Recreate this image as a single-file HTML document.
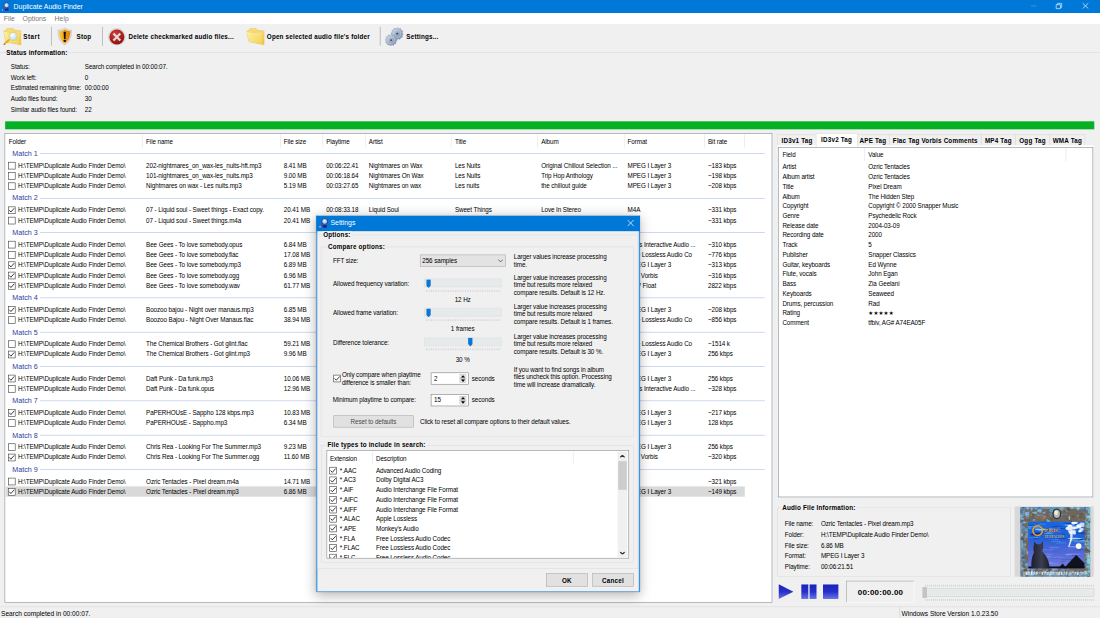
<!DOCTYPE html>
<html lang="en"><head><meta charset="utf-8"><title>Duplicate Audio Finder</title>
<style>
html,body{margin:0;padding:0;background:#f0f0f0;overflow:hidden}
body{width:1100px;height:618px;position:relative}
#root{position:absolute;left:0;top:0;width:1920px;height:1080px;transform-origin:0 0;background:#f0f0f0;overflow:hidden;
 font-family:"Liberation Sans",sans-serif;font-size:11px;color:#000}
#root div,#root span,#root svg.a{position:absolute;box-sizing:border-box}
#root span{white-space:nowrap;display:block}
.t{font-size:11px;letter-spacing:-0.17px}
.b{font-weight:bold;letter-spacing:0.33px}
.cap{background:#f0f0f0;padding:0 2px;margin-left:-2px}
.w{color:#fff}
.g{font-size:12.5px;color:#2c409f;letter-spacing:0}
.cb{border:1px solid #333;background:#fff}
.btn{border:1px solid #adadad;background:#e1e1e1}
.dim{color:#777}
.cap2{background:#fff;padding:0 4px 0 2px;margin-left:-2px}

</style></head>
<body>
<div id="root" style="transform:scale(0.572917,0.572222)">
<svg class="a" style="width:0;height:0"><defs><linearGradient id="gFold" x1="0" y1="0" x2="1" y2="1"><stop offset="0" stop-color="#fdf1a8"/><stop offset="1" stop-color="#f3d155"/></linearGradient><linearGradient id="gFoldB" x1="0" y1="0" x2="0" y2="1"><stop offset="0" stop-color="#f7de7c"/><stop offset="1" stop-color="#ecc545"/></linearGradient><linearGradient id="gShield" x1="0" y1="0" x2="1" y2="0"><stop offset="0" stop-color="#f8c93a"/><stop offset="0.5" stop-color="#f4a515"/><stop offset="1" stop-color="#e58608"/></linearGradient><radialGradient id="gRed" cx="0.4" cy="0.3" r="0.8"><stop offset="0" stop-color="#d93a36"/><stop offset="1" stop-color="#8a0b0b"/></radialGradient><radialGradient id="gLens" cx="0.4" cy="0.35" r="0.7"><stop offset="0" stop-color="#ffffff"/><stop offset="1" stop-color="#a9d4f5"/></radialGradient><linearGradient id="gGear" x1="0" y1="0" x2="1" y2="1"><stop offset="0" stop-color="#cfdae8"/><stop offset="1" stop-color="#7286a8"/></linearGradient><linearGradient id="gPlay" x1="0" y1="0" x2="0" y2="1"><stop offset="0" stop-color="#1a22b8"/><stop offset="0.5" stop-color="#2630cc"/><stop offset="1" stop-color="#6a74e2"/></linearGradient></defs></svg>
<!-- title bar -->
<div style="left:0.0px;top:0.0px;width:1920.0px;height:22.54px;background:#0078d7"></div>
<svg class="a" style="left:2.09px;top:2.8px;width:16.41px;height:16.43px" viewBox="0 0 32 32"><path d="M13 20 L4 29" stroke="#5550b4" stroke-width="5" stroke-linecap="round"/><circle cx="4.4" cy="28.4" r="2.2" fill="#e8eaf6"/><path d="M12 22 q6 4 12 -1 l1.5 8 q-7 4 -13 0 z" fill="#232063"/><circle cx="18.5" cy="12" r="8.8" fill="#9fd8f4" stroke="#3f3c96" stroke-width="3.2"/><circle cx="17.5" cy="10.5" r="3.6" fill="#cfeefb"/></svg>
<span class="t w" style="left:23.74px;top:4.18px;line-height:14px;font-size:12px;letter-spacing:0">Duplicate Audio Finder</span>
<svg class="a" style="left:1780.36px;top:0;width:139.64px;height:22.54px" viewBox="0 0 140 23"><path d="M19 10.6h9.6" stroke="#5aa9e8" stroke-width="1.1" fill="none"/><path d="M63.6 8.3h7.6v7.1h-7.6z M65.8 8.3v-2.3h7.6v7.1h-2.2" stroke="#fff" stroke-width="1.1" fill="none"/><path d="M110.8 5.7l10 9.6M120.8 5.7l-10 9.6" stroke="#fff" stroke-width="1.2" fill="none"/></svg>
<!-- menu bar -->
<div style="left:0.0px;top:22.54px;width:1920.0px;height:19.05px;background:#fff"></div>
<span class="t dim" style="left:6.63px;top:25.33px;line-height:14px;font-size:12px;letter-spacing:0">File</span>
<span class="t dim" style="left:39.45px;top:25.33px;line-height:14px;font-size:12px;letter-spacing:0">Options</span>
<span class="t dim" style="left:95.3px;top:25.33px;line-height:14px;font-size:12px;letter-spacing:0">Help</span>
<!-- toolbar -->
<div style="left:0.0px;top:90.72px;width:1920.0px;height:1px;background:#d9d9d9"></div>
<svg class="a" style="left:4.71px;top:47.88px;width:31.94px;height:31.98px" viewBox="0 0 32 32"><path d="M1.6 6.5 L6.5 4 L8 1.4 L18 1.4 L20 4.4 L32.6 6 L32.6 30.6 L5 25.5 Z" fill="url(#gFoldB)" stroke="#d9b84e" stroke-width="0.7"/><path d="M1.8 7.6 L14 10 L28 8.8 L28.6 29.6 L5.2 25.2 Z" fill="url(#gFold)"/><path d="M10.6 21.8 L2.6 29.2" stroke="#e2ab22" stroke-width="3.2" stroke-linecap="round"/><circle cx="2.6" cy="29.4" r="1.1" fill="#6a5a8a"/><circle cx="18.2" cy="15.6" r="7.3" fill="url(#gLens)" stroke="#efd060" stroke-width="1.8"/></svg>
<span class="t b" style="left:40.67px;top:56.96px;line-height:14px;letter-spacing:0.85px">Start</span>
<div style="left:88.97px;top:47.18px;width:1.5px;height:33.21px;background:#9a9a9a"></div>
<svg class="a" style="left:97.75px;top:47.88px;width:31.94px;height:31.98px" viewBox="0 0 32 32"><path d="M15 0.8 C11.5 3.6 8 4.6 3.2 4.8 C3.2 15.5 5.6 24.8 15 30.6 C24.4 24.8 26.8 15.5 26.8 4.8 C22 4.6 18.5 3.6 15 0.8 Z" fill="#e6e6e6" stroke="#a8a8a8" stroke-width="0.8"/><path d="M15 3 C12 5.4 9 6.3 5.2 6.6 C5.4 15.4 7.6 23 15 28.2 C22.4 23 24.6 15.4 24.8 6.6 C21 6.3 18 5.4 15 3 Z" fill="url(#gShield)"/><path d="M15 3 C18 5.4 21 6.3 24.8 6.6 C24.6 15.4 22.4 23 15 28.2 Z" fill="#e8830a" opacity="0.55"/><path d="M13 7.6 h4 l-0.7 12.4 h-2.6 Z" fill="#14100a"/><circle cx="15" cy="23.4" r="2.1" fill="#14100a"/></svg>
<span class="t b" style="left:133.53px;top:56.96px;line-height:14px;">Stop</span>
<div style="left:177.98px;top:47.18px;width:1.5px;height:33.21px;background:#9a9a9a"></div>
<svg class="a" style="left:187.81px;top:47.53px;width:31.94px;height:31.98px" viewBox="0 0 32 32"><circle cx="16" cy="16.6" r="14.6" fill="#d4d4d4" stroke="#b9b9b9" stroke-width="0.6"/><circle cx="16" cy="16.6" r="13" fill="url(#gRed)"/><path d="M10 10.4 L22 22.8 M22 10.4 L10 22.8" stroke="#dcdcdc" stroke-width="3.9" stroke-linecap="butt"/></svg>
<span class="t b" style="left:224.29px;top:56.96px;line-height:14px;">Delete checkmarked audio files...</span>
<svg class="a" style="left:429.91px;top:47.88px;width:31.94px;height:31.98px" viewBox="0 0 32 32"><path d="M0.4 7 L6 3.6 L7 1.7 L17 1.7 L19 4.6 L31.2 6.3 L31.2 30.2 L4.6 25 Z" fill="url(#gFoldB)" stroke="#d9b84e" stroke-width="0.7"/><path d="M0.6 7.8 L13 10 L26.5 9 L27.2 29.2 L4.8 24.8 Z" fill="url(#gFold)"/></svg>
<span class="t b" style="left:465.69px;top:56.96px;line-height:14px;">Open selected audio file's folder</span>
<div style="left:662.87px;top:47.18px;width:1.5px;height:33.21px;background:#9a9a9a"></div>
<svg class="a" style="left:672.35px;top:47.88px;width:31.94px;height:31.98px" viewBox="0 0 32 32"><polygon points="32.10,10.90 32.01,12.31 30.27,13.30 29.88,14.45 30.65,16.30 29.87,17.47 27.87,17.47 26.95,18.27 26.70,20.25 25.43,20.88 23.70,19.87 22.51,20.11 21.30,21.70 19.89,21.61 18.90,19.87 17.75,19.48 15.90,20.25 14.73,19.47 14.73,17.47 13.93,16.55 11.95,16.30 11.32,15.03 12.33,13.30 12.09,12.11 10.50,10.90 10.59,9.49 12.33,8.50 12.72,7.35 11.95,5.50 12.73,4.33 14.73,4.33 15.65,3.53 15.90,1.55 17.17,0.92 18.90,1.93 20.09,1.69 21.30,0.10 22.71,0.19 23.70,1.93 24.85,2.32 26.70,1.55 27.87,2.33 27.87,4.33 28.67,5.25 30.65,5.50 31.28,6.77 30.27,8.50 30.51,9.69" fill="url(#gGear)" stroke="#7f90ad" stroke-width="0.6"/><circle cx="21.3" cy="10.9" r="6.70" fill="none" stroke="#dfe7f2" stroke-width="0.9" opacity="0.7"/><circle cx="21.3" cy="10.9" r="1.51" fill="#26304a"/><polygon points="20.80,22.20 20.71,23.53 19.07,24.47 18.70,25.56 19.43,27.30 18.69,28.41 16.80,28.40 15.94,29.16 15.70,31.03 14.50,31.62 12.87,30.67 11.74,30.90 10.60,32.40 9.27,32.31 8.33,30.67 7.24,30.30 5.50,31.03 4.39,30.29 4.40,28.40 3.64,27.54 1.77,27.30 1.18,26.10 2.13,24.47 1.90,23.34 0.40,22.20 0.49,20.87 2.13,19.93 2.50,18.84 1.77,17.10 2.51,15.99 4.40,16.00 5.26,15.24 5.50,13.37 6.70,12.78 8.33,13.73 9.46,13.50 10.60,12.00 11.93,12.09 12.87,13.73 13.96,14.10 15.70,13.37 16.81,14.11 16.80,16.00 17.56,16.86 19.43,17.10 20.02,18.30 19.07,19.93 19.30,21.06" fill="url(#gGear)" stroke="#7f90ad" stroke-width="0.6"/><circle cx="10.6" cy="22.2" r="6.32" fill="none" stroke="#dfe7f2" stroke-width="0.9" opacity="0.7"/><circle cx="10.6" cy="22.2" r="1.43" fill="#26304a"/></svg>
<span class="t b" style="left:709.18px;top:56.96px;line-height:14px;">Settings...</span>
<!-- status information -->
<span class="t b" style="left:11.0px;top:85.1px;line-height:14px;">Status information:</span>
<span class="t" style="left:18.85px;top:109.21px;line-height:14px;">Status:</span>
<span class="t" style="left:148.01px;top:109.21px;line-height:14px;">Search completed in 00:00:07.</span>
<span class="t" style="left:18.85px;top:128.09px;line-height:14px;">Work left:</span>
<span class="t" style="left:148.01px;top:128.09px;line-height:14px;">0</span>
<span class="t" style="left:18.85px;top:147.14px;line-height:14px;">Estimated remaining time:</span>
<span class="t" style="left:148.01px;top:147.14px;line-height:14px;">00:00:00</span>
<span class="t" style="left:18.85px;top:166.18px;line-height:14px;">Audio files found:</span>
<span class="t" style="left:148.01px;top:166.18px;line-height:14px;">30</span>
<span class="t" style="left:18.85px;top:184.88px;line-height:14px;">Similar audio files found:</span>
<span class="t" style="left:148.01px;top:184.88px;line-height:14px;">22</span>
<!-- progress bar -->
<div style="left:8.73px;top:211.81px;width:1901.67px;height:14.5px;background:#06b025"></div>
<!-- status bar -->
<div style="left:0.0px;top:1060.1px;width:1920.0px;height:1px;background:#d9d9d9"></div>
<span class="t" style="left:1.75px;top:1065.31px;line-height:14px;font-size:11.5px;letter-spacing:0">Search completed in 00:00:07.</span>
<div style="left:1569.89px;top:1061.48px;width:1px;height:18.52px;background:#d0d0d0"></div>
<span class="t" style="left:1573.7px;top:1065.31px;line-height:14px;font-size:11.5px;letter-spacing:-0.05px">Windows Store Version 1.0.23.50</span>
<!-- result list -->
<div style="left:8.03px;top:233.13px;width:1339.98px;height:820.31px;background:#fff;border:1px solid #828790"></div>
<div style="left:248.23px;top:234.52px;width:1px;height:23.95px;background:#e2e2e2"></div>
<div style="left:488.58px;top:234.52px;width:1px;height:23.95px;background:#e2e2e2"></div>
<div style="left:562.58px;top:234.52px;width:1px;height:23.95px;background:#e2e2e2"></div>
<div style="left:636.94px;top:234.52px;width:1px;height:23.95px;background:#e2e2e2"></div>
<div style="left:787.22px;top:234.52px;width:1px;height:23.95px;background:#e2e2e2"></div>
<div style="left:937.86px;top:234.52px;width:1px;height:23.95px;background:#e2e2e2"></div>
<div style="left:1088.66px;top:234.52px;width:1px;height:23.95px;background:#e2e2e2"></div>
<div style="left:1229.0px;top:234.52px;width:1px;height:23.95px;background:#e2e2e2"></div>
<div style="left:1298.99px;top:234.52px;width:1px;height:23.95px;background:#e2e2e2"></div>
<span class="t" style="left:15.36px;top:240.28px;line-height:14px;">Folder</span>
<span class="t" style="left:255.01px;top:240.28px;line-height:14px;">File name</span>
<span class="t" style="left:495.36px;top:240.28px;line-height:14px;">File size</span>
<span class="t" style="left:569.37px;top:240.28px;line-height:14px;">Playtime</span>
<span class="t" style="left:643.72px;top:240.28px;line-height:14px;">Artist</span>
<span class="t" style="left:794.01px;top:240.28px;line-height:14px;">Title</span>
<span class="t" style="left:944.64px;top:240.28px;line-height:14px;">Album</span>
<span class="t" style="left:1095.45px;top:240.28px;line-height:14px;">Format</span>
<span class="t" style="left:1235.78px;top:240.28px;line-height:14px;">Bit rate</span>
<div style="left:18.5px;top:267.75px;width:1316.77px;height:1px;background:#a9bde0"></div>
<span class="g cap2" style="left:21.47px;top:260.43px;line-height:16px;">Match 1</span>
<div class="cb" style="left:14.27px;top:282.55px;width:13px;height:13px"></div>
<span class="t" style="left:31.24px;top:282.05px;line-height:14px;">H:\TEMP\Duplicate Audio Finder Demo\</span>
<span class="t" style="left:255.01px;top:282.05px;line-height:14px;">202-nightmares_on_wax-les_nuits-hft.mp3</span>
<span class="t" style="left:495.36px;top:282.05px;line-height:14px;">8.41 MB</span>
<span class="t" style="left:569.37px;top:282.05px;line-height:14px;">00:06:22.41</span>
<span class="t" style="left:643.72px;top:282.05px;line-height:14px;">Nightmares on Wax</span>
<span class="t" style="left:794.01px;top:282.05px;line-height:14px;">Les Nuits</span>
<span class="t" style="left:944.64px;top:282.05px;line-height:14px;">Original Chillout Selection ...</span>
<span class="t" style="left:1095.45px;top:282.05px;line-height:14px;">MPEG I Layer 3</span>
<span class="t" style="left:1235.78px;top:282.05px;line-height:14px;">~183 kbps</span>
<div class="cb" style="left:14.27px;top:300.55px;width:13px;height:13px"></div>
<span class="t" style="left:31.24px;top:300.05px;line-height:14px;">H:\TEMP\Duplicate Audio Finder Demo\</span>
<span class="t" style="left:255.01px;top:300.05px;line-height:14px;">101-nightmares_on_wax-les_nuits.mp3</span>
<span class="t" style="left:495.36px;top:300.05px;line-height:14px;">9.00 MB</span>
<span class="t" style="left:569.37px;top:300.05px;line-height:14px;">00:06:18.64</span>
<span class="t" style="left:643.72px;top:300.05px;line-height:14px;">Nightmares On Wax</span>
<span class="t" style="left:794.01px;top:300.05px;line-height:14px;">Les Nuits</span>
<span class="t" style="left:944.64px;top:300.05px;line-height:14px;">Trip Hop Anthology</span>
<span class="t" style="left:1095.45px;top:300.05px;line-height:14px;">MPEG I Layer 3</span>
<span class="t" style="left:1235.78px;top:300.05px;line-height:14px;">~198 kbps</span>
<div class="cb" style="left:14.27px;top:318.55px;width:13px;height:13px"></div>
<span class="t" style="left:31.24px;top:318.05px;line-height:14px;">H:\TEMP\Duplicate Audio Finder Demo\</span>
<span class="t" style="left:255.01px;top:318.05px;line-height:14px;">Nightmares on wax - Les nuits.mp3</span>
<span class="t" style="left:495.36px;top:318.05px;line-height:14px;">5.19 MB</span>
<span class="t" style="left:569.37px;top:318.05px;line-height:14px;">00:03:27.65</span>
<span class="t" style="left:643.72px;top:318.05px;line-height:14px;">Nightmares on wax</span>
<span class="t" style="left:794.01px;top:318.05px;line-height:14px;">Les nuits</span>
<span class="t" style="left:944.64px;top:318.05px;line-height:14px;">the chillout guide</span>
<span class="t" style="left:1095.45px;top:318.05px;line-height:14px;">MPEG I Layer 3</span>
<span class="t" style="left:1235.78px;top:318.05px;line-height:14px;">~208 kbps</span>
<div style="left:18.5px;top:345.78px;width:1316.77px;height:1px;background:#a9bde0"></div>
<span class="g cap2" style="left:21.47px;top:338.46px;line-height:16px;">Match 2</span>
<div class="cb" style="left:14.27px;top:360.58px;width:13px;height:13px"><svg viewBox="0 0 13 13" width="13" height="13" style="position:absolute;left:-1px;top:-1px"><path d="M2.2 6.3 L5.0 9.5 L10.9 2.9" fill="none" stroke="#111" stroke-width="1.45"/></svg></div>
<span class="t" style="left:31.24px;top:360.08px;line-height:14px;">H:\TEMP\Duplicate Audio Finder Demo\</span>
<span class="t" style="left:255.01px;top:360.08px;line-height:14px;">07 - Liquid soul - Sweet things - Exact copy.</span>
<span class="t" style="left:495.36px;top:360.08px;line-height:14px;">20.41 MB</span>
<span class="t" style="left:569.37px;top:360.08px;line-height:14px;">00:08:33.18</span>
<span class="t" style="left:643.72px;top:360.08px;line-height:14px;">Liquid Soul</span>
<span class="t" style="left:794.01px;top:360.08px;line-height:14px;">Sweet Things</span>
<span class="t" style="left:944.64px;top:360.08px;line-height:14px;">Love In Stereo</span>
<span class="t" style="left:1095.45px;top:360.08px;line-height:14px;">M4A</span>
<span class="t" style="left:1235.78px;top:360.08px;line-height:14px;">~331 kbps</span>
<div class="cb" style="left:14.27px;top:378.58px;width:13px;height:13px"></div>
<span class="t" style="left:31.24px;top:378.08px;line-height:14px;">H:\TEMP\Duplicate Audio Finder Demo\</span>
<span class="t" style="left:255.01px;top:378.08px;line-height:14px;">07 - Liquid soul - Sweet things.m4a</span>
<span class="t" style="left:495.36px;top:378.08px;line-height:14px;">20.41 MB</span>
<span class="t" style="left:569.37px;top:378.08px;line-height:14px;">00:08:33.18</span>
<span class="t" style="left:643.72px;top:378.08px;line-height:14px;">Liquid Soul</span>
<span class="t" style="left:794.01px;top:378.08px;line-height:14px;">Sweet Things</span>
<span class="t" style="left:944.64px;top:378.08px;line-height:14px;">Love In Stereo</span>
<span class="t" style="left:1095.45px;top:378.08px;line-height:14px;letter-spacing:-0.9px">M4A</span>
<span class="t" style="left:1235.78px;top:378.08px;line-height:14px;">~331 kbps</span>
<div style="left:18.5px;top:405.81px;width:1316.77px;height:1px;background:#a9bde0"></div>
<span class="g cap2" style="left:21.47px;top:398.49px;line-height:16px;">Match 3</span>
<div class="cb" style="left:14.27px;top:420.61px;width:13px;height:13px"></div>
<span class="t" style="left:31.24px;top:420.11px;line-height:14px;">H:\TEMP\Duplicate Audio Finder Demo\</span>
<span class="t" style="left:255.01px;top:420.11px;line-height:14px;">Bee Gees - To love somebody.opus</span>
<span class="t" style="left:495.36px;top:420.11px;line-height:14px;">6.84 MB</span>
<span class="t" style="left:569.37px;top:420.11px;line-height:14px;">00:03:01.62</span>
<span class="t" style="left:643.72px;top:420.11px;line-height:14px;">Bee Gees</span>
<span class="t" style="left:794.01px;top:420.11px;line-height:14px;">To Love Somebody</span>
<span class="t" style="left:944.64px;top:420.11px;line-height:14px;">Bee Gees 1st</span>
<span class="t" style="left:1095.45px;top:420.11px;line-height:14px;">Opus Interactive Audio ...</span>
<span class="t" style="left:1235.78px;top:420.11px;line-height:14px;">~310 kbps</span>
<div class="cb" style="left:14.27px;top:438.61px;width:13px;height:13px"></div>
<span class="t" style="left:31.24px;top:438.11px;line-height:14px;">H:\TEMP\Duplicate Audio Finder Demo\</span>
<span class="t" style="left:255.01px;top:438.11px;line-height:14px;">Bee Gees - To love somebody.flac</span>
<span class="t" style="left:495.36px;top:438.11px;line-height:14px;">17.08 MB</span>
<span class="t" style="left:569.37px;top:438.11px;line-height:14px;">00:03:01.62</span>
<span class="t" style="left:643.72px;top:438.11px;line-height:14px;">Bee Gees</span>
<span class="t" style="left:794.01px;top:438.11px;line-height:14px;">To Love Somebody</span>
<span class="t" style="left:944.64px;top:438.11px;line-height:14px;">Bee Gees 1st</span>
<span class="t" style="left:1095.45px;top:438.11px;line-height:14px;">Free Lossless Audio Co</span>
<span class="t" style="left:1235.78px;top:438.11px;line-height:14px;">~776 kbps</span>
<div class="cb" style="left:14.27px;top:456.61px;width:13px;height:13px"><svg viewBox="0 0 13 13" width="13" height="13" style="position:absolute;left:-1px;top:-1px"><path d="M2.2 6.3 L5.0 9.5 L10.9 2.9" fill="none" stroke="#111" stroke-width="1.45"/></svg></div>
<span class="t" style="left:31.24px;top:456.11px;line-height:14px;">H:\TEMP\Duplicate Audio Finder Demo\</span>
<span class="t" style="left:255.01px;top:456.11px;line-height:14px;">Bee Gees - To love somebody.mp3</span>
<span class="t" style="left:495.36px;top:456.11px;line-height:14px;">6.89 MB</span>
<span class="t" style="left:569.37px;top:456.11px;line-height:14px;">00:03:01.62</span>
<span class="t" style="left:643.72px;top:456.11px;line-height:14px;">Bee Gees</span>
<span class="t" style="left:794.01px;top:456.11px;line-height:14px;">To Love Somebody</span>
<span class="t" style="left:944.64px;top:456.11px;line-height:14px;">Bee Gees 1st</span>
<span class="t" style="left:1095.45px;top:456.11px;line-height:14px;">MPEG I Layer 3</span>
<span class="t" style="left:1235.78px;top:456.11px;line-height:14px;">~313 kbps</span>
<div class="cb" style="left:14.27px;top:474.61px;width:13px;height:13px"><svg viewBox="0 0 13 13" width="13" height="13" style="position:absolute;left:-1px;top:-1px"><path d="M2.2 6.3 L5.0 9.5 L10.9 2.9" fill="none" stroke="#111" stroke-width="1.45"/></svg></div>
<span class="t" style="left:31.24px;top:474.11px;line-height:14px;">H:\TEMP\Duplicate Audio Finder Demo\</span>
<span class="t" style="left:255.01px;top:474.11px;line-height:14px;">Bee Gees - To love somebody.ogg</span>
<span class="t" style="left:495.36px;top:474.11px;line-height:14px;">6.96 MB</span>
<span class="t" style="left:569.37px;top:474.11px;line-height:14px;">00:03:01.62</span>
<span class="t" style="left:643.72px;top:474.11px;line-height:14px;">Bee Gees</span>
<span class="t" style="left:794.01px;top:474.11px;line-height:14px;">To Love Somebody</span>
<span class="t" style="left:944.64px;top:474.11px;line-height:14px;">Bee Gees 1st</span>
<span class="t" style="left:1095.45px;top:474.11px;line-height:14px;">Ogg Vorbis</span>
<span class="t" style="left:1235.78px;top:474.11px;line-height:14px;">~316 kbps</span>
<div class="cb" style="left:14.27px;top:492.61px;width:13px;height:13px"><svg viewBox="0 0 13 13" width="13" height="13" style="position:absolute;left:-1px;top:-1px"><path d="M2.2 6.3 L5.0 9.5 L10.9 2.9" fill="none" stroke="#111" stroke-width="1.45"/></svg></div>
<span class="t" style="left:31.24px;top:492.11px;line-height:14px;">H:\TEMP\Duplicate Audio Finder Demo\</span>
<span class="t" style="left:255.01px;top:492.11px;line-height:14px;">Bee Gees - To love somebody.wav</span>
<span class="t" style="left:495.36px;top:492.11px;line-height:14px;">61.77 MB</span>
<span class="t" style="left:569.37px;top:492.11px;line-height:14px;">00:03:01.62</span>
<span class="t" style="left:1095.45px;top:492.11px;line-height:14px;">WAV Float</span>
<span class="t" style="left:1235.78px;top:492.11px;line-height:14px;">2822 kbps</span>
<div style="left:18.5px;top:519.84px;width:1316.77px;height:1px;background:#a9bde0"></div>
<span class="g cap2" style="left:21.47px;top:512.51px;line-height:16px;">Match 4</span>
<div class="cb" style="left:14.27px;top:534.64px;width:13px;height:13px"><svg viewBox="0 0 13 13" width="13" height="13" style="position:absolute;left:-1px;top:-1px"><path d="M2.2 6.3 L5.0 9.5 L10.9 2.9" fill="none" stroke="#111" stroke-width="1.45"/></svg></div>
<span class="t" style="left:31.24px;top:534.14px;line-height:14px;">H:\TEMP\Duplicate Audio Finder Demo\</span>
<span class="t" style="left:255.01px;top:534.14px;line-height:14px;">Boozoo bajou - Night over manaus.mp3</span>
<span class="t" style="left:495.36px;top:534.14px;line-height:14px;">6.85 MB</span>
<span class="t" style="left:569.37px;top:534.14px;line-height:14px;">00:05:59.13</span>
<span class="t" style="left:643.72px;top:534.14px;line-height:14px;">Boozoo Bajou</span>
<span class="t" style="left:794.01px;top:534.14px;line-height:14px;">Night Over Manaus</span>
<span class="t" style="left:944.64px;top:534.14px;line-height:14px;">Satta</span>
<span class="t" style="left:1095.45px;top:534.14px;line-height:14px;">MPEG I Layer 3</span>
<span class="t" style="left:1235.78px;top:534.14px;line-height:14px;">~208 kbps</span>
<div class="cb" style="left:14.27px;top:552.64px;width:13px;height:13px"></div>
<span class="t" style="left:31.24px;top:552.14px;line-height:14px;">H:\TEMP\Duplicate Audio Finder Demo\</span>
<span class="t" style="left:255.01px;top:552.14px;line-height:14px;">Boozoo Bajou - Night Over Manaus.flac</span>
<span class="t" style="left:495.36px;top:552.14px;line-height:14px;">38.94 MB</span>
<span class="t" style="left:569.37px;top:552.14px;line-height:14px;">00:05:59.13</span>
<span class="t" style="left:643.72px;top:552.14px;line-height:14px;">Boozoo Bajou</span>
<span class="t" style="left:794.01px;top:552.14px;line-height:14px;">Night Over Manaus</span>
<span class="t" style="left:944.64px;top:552.14px;line-height:14px;">Satta</span>
<span class="t" style="left:1095.45px;top:552.14px;line-height:14px;">Free Lossless Audio Co</span>
<span class="t" style="left:1235.78px;top:552.14px;line-height:14px;">~856 kbps</span>
<div style="left:18.5px;top:579.87px;width:1316.77px;height:1px;background:#a9bde0"></div>
<span class="g cap2" style="left:21.47px;top:572.54px;line-height:16px;">Match 5</span>
<div class="cb" style="left:14.27px;top:594.67px;width:13px;height:13px"></div>
<span class="t" style="left:31.24px;top:594.17px;line-height:14px;">H:\TEMP\Duplicate Audio Finder Demo\</span>
<span class="t" style="left:255.01px;top:594.17px;line-height:14px;">The Chemical Brothers - Got glint.flac</span>
<span class="t" style="left:495.36px;top:594.17px;line-height:14px;">59.21 MB</span>
<span class="t" style="left:569.37px;top:594.17px;line-height:14px;">00:05:26.40</span>
<span class="t" style="left:643.72px;top:594.17px;line-height:14px;">The Chemical Brothers</span>
<span class="t" style="left:794.01px;top:594.17px;line-height:14px;">Got Glint?</span>
<span class="t" style="left:944.64px;top:594.17px;line-height:14px;">Surrender</span>
<span class="t" style="left:1095.45px;top:594.17px;line-height:14px;">Free Lossless Audio Co</span>
<span class="t" style="left:1235.78px;top:594.17px;line-height:14px;">~1514 k</span>
<div class="cb" style="left:14.27px;top:612.67px;width:13px;height:13px"><svg viewBox="0 0 13 13" width="13" height="13" style="position:absolute;left:-1px;top:-1px"><path d="M2.2 6.3 L5.0 9.5 L10.9 2.9" fill="none" stroke="#111" stroke-width="1.45"/></svg></div>
<span class="t" style="left:31.24px;top:612.17px;line-height:14px;">H:\TEMP\Duplicate Audio Finder Demo\</span>
<span class="t" style="left:255.01px;top:612.17px;line-height:14px;">The Chemical Brothers - Got glint.mp3</span>
<span class="t" style="left:495.36px;top:612.17px;line-height:14px;">9.96 MB</span>
<span class="t" style="left:569.37px;top:612.17px;line-height:14px;">00:05:26.40</span>
<span class="t" style="left:643.72px;top:612.17px;line-height:14px;">The Chemical Brothers</span>
<span class="t" style="left:794.01px;top:612.17px;line-height:14px;">Got Glint?</span>
<span class="t" style="left:944.64px;top:612.17px;line-height:14px;">Surrender</span>
<span class="t" style="left:1095.45px;top:612.17px;line-height:14px;">MPEG I Layer 3</span>
<span class="t" style="left:1235.78px;top:612.17px;line-height:14px;">256 kbps</span>
<div style="left:18.5px;top:639.9px;width:1316.77px;height:1px;background:#a9bde0"></div>
<span class="g cap2" style="left:21.47px;top:632.57px;line-height:16px;">Match 6</span>
<div class="cb" style="left:14.27px;top:654.69px;width:13px;height:13px"><svg viewBox="0 0 13 13" width="13" height="13" style="position:absolute;left:-1px;top:-1px"><path d="M2.2 6.3 L5.0 9.5 L10.9 2.9" fill="none" stroke="#111" stroke-width="1.45"/></svg></div>
<span class="t" style="left:31.24px;top:654.19px;line-height:14px;">H:\TEMP\Duplicate Audio Finder Demo\</span>
<span class="t" style="left:255.01px;top:654.19px;line-height:14px;">Daft Punk - Da funk.mp3</span>
<span class="t" style="left:495.36px;top:654.19px;line-height:14px;">10.06 MB</span>
<span class="t" style="left:569.37px;top:654.19px;line-height:14px;">00:05:28.72</span>
<span class="t" style="left:643.72px;top:654.19px;line-height:14px;">Daft Punk</span>
<span class="t" style="left:794.01px;top:654.19px;line-height:14px;">Da Funk</span>
<span class="t" style="left:944.64px;top:654.19px;line-height:14px;">Homework</span>
<span class="t" style="left:1095.45px;top:654.19px;line-height:14px;">MPEG I Layer 3</span>
<span class="t" style="left:1235.78px;top:654.19px;line-height:14px;">256 kbps</span>
<div class="cb" style="left:14.27px;top:672.69px;width:13px;height:13px"></div>
<span class="t" style="left:31.24px;top:672.19px;line-height:14px;">H:\TEMP\Duplicate Audio Finder Demo\</span>
<span class="t" style="left:255.01px;top:672.19px;line-height:14px;">Daft Punk - Da funk.opus</span>
<span class="t" style="left:495.36px;top:672.19px;line-height:14px;">12.96 MB</span>
<span class="t" style="left:569.37px;top:672.19px;line-height:14px;">00:05:28.72</span>
<span class="t" style="left:643.72px;top:672.19px;line-height:14px;">Daft Punk</span>
<span class="t" style="left:794.01px;top:672.19px;line-height:14px;">Da Funk</span>
<span class="t" style="left:944.64px;top:672.19px;line-height:14px;">Homework</span>
<span class="t" style="left:1095.45px;top:672.19px;line-height:14px;">Opus Interactive Audio ...</span>
<span class="t" style="left:1235.78px;top:672.19px;line-height:14px;">~328 kbps</span>
<div style="left:18.5px;top:699.93px;width:1316.77px;height:1px;background:#a9bde0"></div>
<span class="g cap2" style="left:21.47px;top:692.6px;line-height:16px;">Match 7</span>
<div class="cb" style="left:14.27px;top:714.72px;width:13px;height:13px"><svg viewBox="0 0 13 13" width="13" height="13" style="position:absolute;left:-1px;top:-1px"><path d="M2.2 6.3 L5.0 9.5 L10.9 2.9" fill="none" stroke="#111" stroke-width="1.45"/></svg></div>
<span class="t" style="left:31.24px;top:714.22px;line-height:14px;">H:\TEMP\Duplicate Audio Finder Demo\</span>
<span class="t" style="left:255.01px;top:714.22px;line-height:14px;">PaPERHOUsE - Sappho 128 kbps.mp3</span>
<span class="t" style="left:495.36px;top:714.22px;line-height:14px;">10.83 MB</span>
<span class="t" style="left:569.37px;top:714.22px;line-height:14px;">00:06:38.04</span>
<span class="t" style="left:643.72px;top:714.22px;line-height:14px;">Paperhouse</span>
<span class="t" style="left:794.01px;top:714.22px;line-height:14px;">Sappho</span>
<span class="t" style="left:944.64px;top:714.22px;line-height:14px;">Spongy Wet Sounds</span>
<span class="t" style="left:1095.45px;top:714.22px;line-height:14px;">MPEG I Layer 3</span>
<span class="t" style="left:1235.78px;top:714.22px;line-height:14px;">~217 kbps</span>
<div class="cb" style="left:14.27px;top:732.72px;width:13px;height:13px"></div>
<span class="t" style="left:31.24px;top:732.22px;line-height:14px;">H:\TEMP\Duplicate Audio Finder Demo\</span>
<span class="t" style="left:255.01px;top:732.22px;line-height:14px;">PaPERHOUsE - Sappho.mp3</span>
<span class="t" style="left:495.36px;top:732.22px;line-height:14px;">6.34 MB</span>
<span class="t" style="left:569.37px;top:732.22px;line-height:14px;">00:06:38.04</span>
<span class="t" style="left:643.72px;top:732.22px;line-height:14px;">Paperhouse</span>
<span class="t" style="left:794.01px;top:732.22px;line-height:14px;">Sappho</span>
<span class="t" style="left:944.64px;top:732.22px;line-height:14px;">Spongy Wet Sounds</span>
<span class="t" style="left:1095.45px;top:732.22px;line-height:14px;">MPEG I Layer 3</span>
<span class="t" style="left:1235.78px;top:732.22px;line-height:14px;">128 kbps</span>
<div style="left:18.5px;top:759.96px;width:1316.77px;height:1px;background:#a9bde0"></div>
<span class="g cap2" style="left:21.47px;top:752.63px;line-height:16px;">Match 8</span>
<div class="cb" style="left:14.27px;top:774.75px;width:13px;height:13px"></div>
<span class="t" style="left:31.24px;top:774.25px;line-height:14px;">H:\TEMP\Duplicate Audio Finder Demo\</span>
<span class="t" style="left:255.01px;top:774.25px;line-height:14px;">Chris Rea - Looking For The Summer.mp3</span>
<span class="t" style="left:495.36px;top:774.25px;line-height:14px;">9.23 MB</span>
<span class="t" style="left:569.37px;top:774.25px;line-height:14px;">00:05:02.10</span>
<span class="t" style="left:643.72px;top:774.25px;line-height:14px;">Chris Rea</span>
<span class="t" style="left:794.01px;top:774.25px;line-height:14px;">Looking For The Summer</span>
<span class="t" style="left:944.64px;top:774.25px;line-height:14px;">Auberge</span>
<span class="t" style="left:1095.45px;top:774.25px;line-height:14px;">MPEG I Layer 3</span>
<span class="t" style="left:1235.78px;top:774.25px;line-height:14px;">256 kbps</span>
<div class="cb" style="left:14.27px;top:792.75px;width:13px;height:13px"><svg viewBox="0 0 13 13" width="13" height="13" style="position:absolute;left:-1px;top:-1px"><path d="M2.2 6.3 L5.0 9.5 L10.9 2.9" fill="none" stroke="#111" stroke-width="1.45"/></svg></div>
<span class="t" style="left:31.24px;top:792.25px;line-height:14px;">H:\TEMP\Duplicate Audio Finder Demo\</span>
<span class="t" style="left:255.01px;top:792.25px;line-height:14px;">Chris Rea - Looking For The Summer.ogg</span>
<span class="t" style="left:495.36px;top:792.25px;line-height:14px;">11.60 MB</span>
<span class="t" style="left:569.37px;top:792.25px;line-height:14px;">00:05:02.10</span>
<span class="t" style="left:643.72px;top:792.25px;line-height:14px;">Chris Rea</span>
<span class="t" style="left:794.01px;top:792.25px;line-height:14px;">Looking For The Summer</span>
<span class="t" style="left:944.64px;top:792.25px;line-height:14px;">Auberge</span>
<span class="t" style="left:1095.45px;top:792.25px;line-height:14px;">Ogg Vorbis</span>
<span class="t" style="left:1235.78px;top:792.25px;line-height:14px;">~320 kbps</span>
<div style="left:18.5px;top:819.99px;width:1316.77px;height:1px;background:#a9bde0"></div>
<span class="g cap2" style="left:21.47px;top:812.66px;line-height:16px;">Match 9</span>
<div class="cb" style="left:14.27px;top:834.78px;width:13px;height:13px"></div>
<span class="t" style="left:31.24px;top:834.28px;line-height:14px;">H:\TEMP\Duplicate Audio Finder Demo\</span>
<span class="t" style="left:255.01px;top:834.28px;line-height:14px;">Ozric Tentacles - Pixel dream.m4a</span>
<span class="t" style="left:495.36px;top:834.28px;line-height:14px;">14.71 MB</span>
<span class="t" style="left:569.37px;top:834.28px;line-height:14px;">00:06:21.51</span>
<span class="t" style="left:643.72px;top:834.28px;line-height:14px;">Ozric Tentacles</span>
<span class="t" style="left:794.01px;top:834.28px;line-height:14px;">Pixel Dream</span>
<span class="t" style="left:944.64px;top:834.28px;line-height:14px;">The Hidden Step</span>
<span class="t" style="left:1095.45px;top:834.28px;line-height:14px;letter-spacing:-0.9px">M4A</span>
<span class="t" style="left:1235.78px;top:834.28px;line-height:14px;">~321 kbps</span>
<div style="left:9.77px;top:850.46px;width:1290.07px;height:17.65px;background:#d9d9d9"></div>
<div class="cb" style="left:14.27px;top:852.78px;width:13px;height:13px"><svg viewBox="0 0 13 13" width="13" height="13" style="position:absolute;left:-1px;top:-1px"><path d="M2.2 6.3 L5.0 9.5 L10.9 2.9" fill="none" stroke="#111" stroke-width="1.45"/></svg></div>
<span class="t" style="left:31.24px;top:852.28px;line-height:14px;">H:\TEMP\Duplicate Audio Finder Demo\</span>
<span class="t" style="left:255.01px;top:852.28px;line-height:14px;">Ozric Tentacles - Pixel dream.mp3</span>
<span class="t" style="left:495.36px;top:852.28px;line-height:14px;">6.86 MB</span>
<span class="t" style="left:569.37px;top:852.28px;line-height:14px;">00:06:21.51</span>
<span class="t" style="left:643.72px;top:852.28px;line-height:14px;">Ozric Tentacles</span>
<span class="t" style="left:794.01px;top:852.28px;line-height:14px;">Pixel Dream</span>
<span class="t" style="left:944.64px;top:852.28px;line-height:14px;">The Hidden Step</span>
<span class="t" style="left:1095.45px;top:852.28px;line-height:14px;">MPEG I Layer 3</span>
<span class="t" style="left:1235.78px;top:852.28px;line-height:14px;">~149 kbps</span>
<!-- tag tabs -->
<div style="left:1356.92px;top:235.22px;width:69.12px;height:18.88px;background:#f0f0f0;border:1px solid #d9d9d9;border-bottom:none"></div>
<span class="t b" style="left:1281.21px;width:220px;text-align:center;top:238.88px;line-height:14px;">ID3v1 Tag</span>
<div style="left:1494.98px;top:235.22px;width:57.95px;height:18.88px;background:#f0f0f0;border:1px solid #d9d9d9;border-bottom:none"></div>
<span class="t b" style="left:1413.69px;width:220px;text-align:center;top:238.88px;line-height:14px;">APE Tag</span>
<div style="left:1552.41px;top:235.22px;width:160.75px;height:18.88px;background:#f0f0f0;border:1px solid #d9d9d9;border-bottom:none"></div>
<span class="t b" style="left:1522.52px;width:220px;text-align:center;top:238.88px;line-height:14px;">Flac Tag Vorbis Comments</span>
<div style="left:1712.64px;top:235.22px;width:60.22px;height:18.88px;background:#f0f0f0;border:1px solid #d9d9d9;border-bottom:none"></div>
<span class="t b" style="left:1632.49px;width:220px;text-align:center;top:238.88px;line-height:14px;">MP4 Tag</span>
<div style="left:1772.33px;top:235.22px;width:60.22px;height:18.88px;background:#f0f0f0;border:1px solid #d9d9d9;border-bottom:none"></div>
<span class="t b" style="left:1692.18px;width:220px;text-align:center;top:238.88px;line-height:14px;">Ogg Tag</span>
<div style="left:1832.03px;top:235.22px;width:62.31px;height:18.88px;background:#f0f0f0;border:1px solid #d9d9d9;border-bottom:none"></div>
<span class="t b" style="left:1752.92px;width:220px;text-align:center;top:238.88px;line-height:14px;">WMA Tag</span>
<div style="left:1356.92px;top:253.75px;width:552.26px;height:3.49px;background:#fff"></div>
<div style="left:1357.96px;top:256.89px;width:550.17px;height:612.0px;background:#fff;border:1px solid #828790"></div>
<div style="left:1424.47px;top:233.48px;width:72.08px;height:23.24px;background:#fff;border:1px solid #d9d9d9;border-bottom:none"></div>
<span class="t b" style="left:1350.25px;width:220px;text-align:center;top:236.79px;line-height:14px;">ID3v2 Tag</span>
<div style="left:1507.92px;top:258.29px;width:1px;height:23.42px;background:#e2e2e2"></div>
<div style="left:1859.81px;top:258.29px;width:1px;height:23.42px;background:#e2e2e2"></div>
<span class="t" style="left:1365.64px;top:264.05px;line-height:14px;">Field</span>
<span class="t" style="left:1515.58px;top:264.05px;line-height:14px;">Value</span>
<span class="t" style="left:1365.64px;top:285.19px;line-height:14px;">Artist</span>
<span class="t" style="left:1515.58px;top:285.19px;line-height:14px;">Ozric Tentacles</span>
<span class="t" style="left:1365.64px;top:302.18px;line-height:14px;">Album artist</span>
<span class="t" style="left:1515.58px;top:302.18px;line-height:14px;">Ozric Tentacles</span>
<span class="t" style="left:1365.64px;top:319.17px;line-height:14px;">Title</span>
<span class="t" style="left:1515.58px;top:319.17px;line-height:14px;">Pixel Dream</span>
<span class="t" style="left:1365.64px;top:336.15px;line-height:14px;">Album</span>
<span class="t" style="left:1515.58px;top:336.15px;line-height:14px;">The Hidden Step</span>
<span class="t" style="left:1365.64px;top:353.14px;line-height:14px;">Copyright</span>
<span class="t" style="left:1515.58px;top:353.14px;line-height:14px;">Copyright © 2000 Snapper Music</span>
<span class="t" style="left:1365.64px;top:370.13px;line-height:14px;">Genre</span>
<span class="t" style="left:1515.58px;top:370.13px;line-height:14px;">Psychedelic Rock</span>
<span class="t" style="left:1365.64px;top:387.11px;line-height:14px;">Release date</span>
<span class="t" style="left:1515.58px;top:387.11px;line-height:14px;">2004-03-09</span>
<span class="t" style="left:1365.64px;top:404.1px;line-height:14px;">Recording date</span>
<span class="t" style="left:1515.58px;top:404.1px;line-height:14px;">2000</span>
<span class="t" style="left:1365.64px;top:421.09px;line-height:14px;">Track</span>
<span class="t" style="left:1515.58px;top:421.09px;line-height:14px;">5</span>
<span class="t" style="left:1365.64px;top:438.07px;line-height:14px;">Publisher</span>
<span class="t" style="left:1515.58px;top:438.07px;line-height:14px;">Snapper Classics</span>
<span class="t" style="left:1365.64px;top:455.06px;line-height:14px;">Guitar, keyboards</span>
<span class="t" style="left:1515.58px;top:455.06px;line-height:14px;">Ed Wynne</span>
<span class="t" style="left:1365.64px;top:472.04px;line-height:14px;">Flute, vocals</span>
<span class="t" style="left:1515.58px;top:472.04px;line-height:14px;">John Egan</span>
<span class="t" style="left:1365.64px;top:489.03px;line-height:14px;">Bass</span>
<span class="t" style="left:1515.58px;top:489.03px;line-height:14px;">Zia Geelani</span>
<span class="t" style="left:1365.64px;top:506.02px;line-height:14px;">Keyboards</span>
<span class="t" style="left:1515.58px;top:506.02px;line-height:14px;">Seaweed</span>
<span class="t" style="left:1365.64px;top:523.0px;line-height:14px;">Drums, percussion</span>
<span class="t" style="left:1515.58px;top:523.0px;line-height:14px;">Rad</span>
<span class="t" style="left:1365.64px;top:539.99px;line-height:14px;">Rating</span>
<span class="t" style="left:1515.58px;top:539.99px;line-height:14px;font-size:9.6px;letter-spacing:0.3px;font-family:'DejaVu Sans',sans-serif">★★★★★</span>
<span class="t" style="left:1365.64px;top:556.98px;line-height:14px;">Comment</span>
<span class="t" style="left:1515.58px;top:556.98px;line-height:14px;">tfbiv, AG# A74EA05F</span>
<!-- audio file information -->
<div style="left:1356.57px;top:887.07px;width:407.39px;height:120.58px;border:1px solid #dcdcdc;box-sizing:border-box"></div>
<span class="t b cap" style="left:1365.47px;top:880.07px;line-height:14px;">Audio File Information:</span>
<span class="t" style="left:1369.83px;top:907.5px;line-height:14px;">File name:</span>
<span class="t" style="left:1432.84px;top:907.5px;line-height:14px;">Ozric Tentacles - Pixel dream.mp3</span>
<span class="t" style="left:1369.83px;top:926.73px;line-height:14px;">Folder:</span>
<span class="t" style="left:1432.84px;top:926.73px;line-height:14px;">H:\TEMP\Duplicate Audio Finder Demo\</span>
<span class="t" style="left:1369.83px;top:945.78px;line-height:14px;">File size:</span>
<span class="t" style="left:1432.84px;top:945.78px;line-height:14px;">6.86 MB</span>
<span class="t" style="left:1369.83px;top:964.83px;line-height:14px;">Format:</span>
<span class="t" style="left:1432.84px;top:964.83px;line-height:14px;">MPEG I Layer 3</span>
<span class="t" style="left:1369.83px;top:984.05px;line-height:14px;">Playtime:</span>
<span class="t" style="left:1432.84px;top:984.05px;line-height:14px;">00:06:21.51</span>
<!-- album art -->
<div style="left:1770.94px;top:884.97px;width:138.41px;height:123.38px;background:#d8d8d8"></div>
<svg class="a" style="left:1780.54px;top:885.84px;width:122.01px;height:121.81px" viewBox="0 0 100 100" preserveAspectRatio="none"><defs><linearGradient id="gSky" x1="0" y1="0" x2="0" y2="1"><stop offset="0" stop-color="#1766de"/><stop offset="0.35" stop-color="#2460d6"/><stop offset="0.6" stop-color="#4a66d6"/><stop offset="1" stop-color="#747cde"/></linearGradient><linearGradient id="gCat" x1="0" y1="0" x2="1" y2="0"><stop offset="0" stop-color="#1c1e2a"/><stop offset="0.55" stop-color="#3a3e50"/><stop offset="1" stop-color="#1a1c28"/></linearGradient><clipPath id="cSky"><rect x="11.2" y="21.1" width="80.8" height="67.2"/></clipPath></defs><rect width="100" height="100" fill="#70675c"/><rect x="1.5" y="1.5" width="97" height="97" fill="none" stroke="#6a9bd0" stroke-width="3" opacity="0.75"/><rect x="95.5" y="3" width="3" height="94" fill="#7fc7cc" opacity="0.7"/><ellipse cx="10.0" cy="8.4" rx="2.0" ry="2.0" fill="#857868" opacity="0.90"/><ellipse cx="5.0" cy="22.1" rx="1.0" ry="1.0" fill="#6d9cd4" opacity="0.80"/><ellipse cx="94.9" cy="5.8" rx="2.7" ry="2.2" fill="#6fb8c6" opacity="0.85"/><ellipse cx="10.8" cy="28.1" rx="2.4" ry="2.6" fill="#4f7fb6" opacity="0.90"/><ellipse cx="97.4" cy="16.4" rx="2.7" ry="1.9" fill="#7fc7cc" opacity="0.68"/><ellipse cx="92.3" cy="27.6" rx="3.1" ry="1.5" fill="#6b6157" opacity="0.97"/><ellipse cx="10.0" cy="45.5" rx="1.3" ry="2.2" fill="#7b6f63" opacity="0.90"/><ellipse cx="93.9" cy="54.5" rx="3.5" ry="1.2" fill="#7fc7cc" opacity="0.67"/><ellipse cx="95.1" cy="16.3" rx="0.9" ry="1.3" fill="#7b6f63" opacity="0.84"/><ellipse cx="98.0" cy="34.6" rx="1.4" ry="1.0" fill="#9bdad8" opacity="0.84"/><ellipse cx="99.6" cy="21.6" rx="2.3" ry="1.2" fill="#5d564f" opacity="0.85"/><ellipse cx="25.3" cy="93.2" rx="2.1" ry="1.6" fill="#4d6fa6" opacity="0.93"/><ellipse cx="92.6" cy="96.1" rx="2.4" ry="1.7" fill="#5a9fc3" opacity="0.92"/><ellipse cx="82.7" cy="2.3" rx="2.4" ry="2.6" fill="#8fd3d4" opacity="0.71"/><ellipse cx="33.8" cy="14.5" rx="3.3" ry="2.9" fill="#8c8072" opacity="1.00"/><ellipse cx="0.0" cy="37.7" rx="1.3" ry="2.7" fill="#7ab6d6" opacity="0.93"/><ellipse cx="17.3" cy="9.4" rx="1.1" ry="2.3" fill="#6d9cd4" opacity="0.86"/><ellipse cx="52.6" cy="91.8" rx="1.1" ry="2.7" fill="#6d9cd4" opacity="0.78"/><ellipse cx="67.3" cy="12.7" rx="1.8" ry="1.6" fill="#6b6157" opacity="0.75"/><ellipse cx="1.8" cy="4.3" rx="2.7" ry="2.5" fill="#5a9fc3" opacity="0.84"/><ellipse cx="38.4" cy="18.8" rx="1.3" ry="1.6" fill="#6d9cd4" opacity="1.00"/><ellipse cx="6.3" cy="44.2" rx="1.6" ry="2.7" fill="#7ab6d6" opacity="0.92"/><ellipse cx="92.3" cy="80.7" rx="1.9" ry="1.1" fill="#7b6f63" opacity="0.71"/><ellipse cx="96.9" cy="36.1" rx="2.8" ry="2.1" fill="#7fc7cc" opacity="0.99"/><ellipse cx="98.6" cy="89.9" rx="3.4" ry="1.4" fill="#5a9fc3" opacity="0.85"/><ellipse cx="82.2" cy="12.7" rx="1.3" ry="1.0" fill="#8fd3d4" opacity="0.72"/><ellipse cx="99.9" cy="75.8" rx="3.4" ry="2.3" fill="#8fd3d4" opacity="0.91"/><ellipse cx="5.1" cy="66.0" rx="2.6" ry="1.6" fill="#5a9fc3" opacity="0.94"/><ellipse cx="49.2" cy="7.4" rx="2.7" ry="1.2" fill="#6b6157" opacity="0.79"/><ellipse cx="4.1" cy="15.5" rx="1.3" ry="2.8" fill="#6b6157" opacity="0.74"/><ellipse cx="0.4" cy="29.6" rx="2.0" ry="1.6" fill="#6d9cd4" opacity="0.99"/><ellipse cx="98.5" cy="18.2" rx="3.0" ry="3.0" fill="#9bdad8" opacity="0.94"/><ellipse cx="97.1" cy="25.5" rx="1.8" ry="2.9" fill="#6fb8c6" opacity="0.90"/><ellipse cx="60.2" cy="89.0" rx="2.3" ry="2.0" fill="#7b6f63" opacity="0.97"/><ellipse cx="95.8" cy="14.6" rx="2.6" ry="2.5" fill="#8fd3d4" opacity="0.84"/><ellipse cx="85.2" cy="97.5" rx="2.8" ry="1.7" fill="#7fb4e0" opacity="0.98"/><ellipse cx="3.8" cy="73.9" rx="2.7" ry="2.5" fill="#5d564f" opacity="0.70"/><ellipse cx="66.7" cy="89.6" rx="3.5" ry="1.0" fill="#6aa3d0" opacity="0.94"/><ellipse cx="72.0" cy="20.1" rx="2.3" ry="1.4" fill="#5d564f" opacity="0.80"/><ellipse cx="87.6" cy="4.1" rx="1.1" ry="2.6" fill="#4f7fb6" opacity="0.94"/><ellipse cx="92.5" cy="66.3" rx="3.5" ry="0.8" fill="#8c8072" opacity="0.92"/><ellipse cx="98.4" cy="63.6" rx="3.1" ry="1.6" fill="#5d564f" opacity="0.98"/><ellipse cx="92.1" cy="49.7" rx="1.7" ry="2.4" fill="#7b6f63" opacity="0.94"/><ellipse cx="30.7" cy="98.1" rx="1.3" ry="2.6" fill="#7b6f63" opacity="0.86"/><ellipse cx="98.0" cy="19.7" rx="2.7" ry="2.2" fill="#5d564f" opacity="0.98"/><ellipse cx="83.9" cy="91.4" rx="3.1" ry="2.4" fill="#4f7fb6" opacity="0.69"/><ellipse cx="94.9" cy="20.5" rx="3.0" ry="1.0" fill="#7ab6d6" opacity="0.70"/><ellipse cx="95.7" cy="16.0" rx="1.0" ry="2.1" fill="#7fc7cc" opacity="0.92"/><ellipse cx="7.0" cy="92.7" rx="1.0" ry="2.6" fill="#857868" opacity="0.97"/><ellipse cx="3.9" cy="20.6" rx="2.7" ry="1.5" fill="#4d6fa6" opacity="0.97"/><ellipse cx="40.4" cy="14.0" rx="2.9" ry="1.2" fill="#7b6f63" opacity="0.66"/><ellipse cx="7.8" cy="10.6" rx="3.0" ry="2.2" fill="#86c3df" opacity="0.98"/><ellipse cx="40.9" cy="89.8" rx="2.4" ry="2.1" fill="#5d564f" opacity="0.85"/><ellipse cx="97.4" cy="17.8" rx="2.9" ry="2.4" fill="#7b6f63" opacity="0.96"/><ellipse cx="6.1" cy="87.9" rx="2.8" ry="0.9" fill="#4d6fa6" opacity="0.88"/><ellipse cx="27.5" cy="2.4" rx="1.5" ry="3.0" fill="#4d6fa6" opacity="0.96"/><ellipse cx="60.2" cy="97.8" rx="1.6" ry="2.9" fill="#7ab6d6" opacity="0.99"/><ellipse cx="98.1" cy="99.8" rx="2.9" ry="2.4" fill="#4d6fa6" opacity="0.77"/><ellipse cx="58.8" cy="98.2" rx="1.9" ry="1.5" fill="#7b6f63" opacity="0.67"/><ellipse cx="11.5" cy="89.7" rx="3.2" ry="1.6" fill="#7b6f63" opacity="0.97"/><ellipse cx="3.7" cy="57.1" rx="2.1" ry="2.4" fill="#7ab6d6" opacity="0.95"/><ellipse cx="99.2" cy="74.6" rx="3.0" ry="2.5" fill="#7fc7cc" opacity="0.94"/><ellipse cx="97.1" cy="4.4" rx="3.4" ry="2.7" fill="#6d9cd4" opacity="0.92"/><ellipse cx="65.7" cy="90.5" rx="3.3" ry="2.1" fill="#7b6f63" opacity="0.76"/><ellipse cx="96.7" cy="75.9" rx="2.3" ry="1.2" fill="#9bdad8" opacity="0.80"/><ellipse cx="11.6" cy="90.7" rx="0.9" ry="1.7" fill="#6b6157" opacity="0.71"/><ellipse cx="21.8" cy="88.4" rx="2.3" ry="1.7" fill="#857868" opacity="0.79"/><ellipse cx="91.2" cy="88.8" rx="1.5" ry="2.4" fill="#7b6f63" opacity="0.71"/><ellipse cx="73.8" cy="0.5" rx="2.2" ry="2.2" fill="#7fc7cc" opacity="0.96"/><ellipse cx="27.0" cy="97.3" rx="1.2" ry="1.2" fill="#7b6f63" opacity="1.00"/><ellipse cx="85.0" cy="96.4" rx="1.6" ry="1.9" fill="#5f8fc2" opacity="0.95"/><ellipse cx="0.7" cy="94.2" rx="3.2" ry="0.8" fill="#4d6fa6" opacity="0.73"/><ellipse cx="33.2" cy="19.5" rx="3.2" ry="2.8" fill="#5d564f" opacity="0.95"/><ellipse cx="48.7" cy="89.3" rx="3.2" ry="2.3" fill="#86c3df" opacity="0.87"/><ellipse cx="3.3" cy="75.4" rx="2.7" ry="0.9" fill="#6aa3d0" opacity="0.95"/><ellipse cx="97.0" cy="37.6" rx="2.5" ry="2.8" fill="#4f7fb6" opacity="0.73"/><ellipse cx="97.6" cy="54.2" rx="2.2" ry="1.0" fill="#7fc7cc" opacity="0.83"/><ellipse cx="3.2" cy="97.7" rx="2.9" ry="0.9" fill="#5d564f" opacity="0.74"/><ellipse cx="20.4" cy="90.1" rx="2.4" ry="2.6" fill="#6b6157" opacity="0.91"/><ellipse cx="93.3" cy="72.8" rx="1.4" ry="2.0" fill="#857868" opacity="0.85"/><ellipse cx="1.6" cy="92.8" rx="3.2" ry="2.1" fill="#8c8072" opacity="0.72"/><ellipse cx="98.1" cy="45.1" rx="1.8" ry="2.6" fill="#5d564f" opacity="0.96"/><ellipse cx="1.0" cy="22.9" rx="1.3" ry="1.5" fill="#7ab6d6" opacity="0.66"/><ellipse cx="94.3" cy="87.1" rx="1.1" ry="2.1" fill="#7b6f63" opacity="0.92"/><ellipse cx="0.9" cy="7.2" rx="1.9" ry="1.0" fill="#857868" opacity="0.76"/><ellipse cx="24.9" cy="7.0" rx="3.4" ry="1.1" fill="#5a9fc3" opacity="0.91"/><ellipse cx="31.5" cy="10.2" rx="1.4" ry="2.4" fill="#4d6fa6" opacity="0.84"/><ellipse cx="5.6" cy="60.3" rx="2.6" ry="1.7" fill="#8c8072" opacity="0.86"/><ellipse cx="94.5" cy="86.7" rx="2.2" ry="2.1" fill="#7b6f63" opacity="0.86"/><ellipse cx="0.2" cy="18.1" rx="3.3" ry="1.1" fill="#8c8072" opacity="0.90"/><ellipse cx="94.5" cy="66.9" rx="3.0" ry="1.4" fill="#6fb8c6" opacity="0.92"/><ellipse cx="93.2" cy="42.1" rx="1.5" ry="1.1" fill="#8c8072" opacity="0.70"/><ellipse cx="10.3" cy="38.5" rx="2.3" ry="2.9" fill="#857868" opacity="0.90"/><ellipse cx="45.7" cy="1.7" rx="1.3" ry="2.1" fill="#5a9fc3" opacity="0.78"/><ellipse cx="47.6" cy="98.3" rx="3.1" ry="1.7" fill="#6d9cd4" opacity="0.91"/><ellipse cx="66.6" cy="92.5" rx="1.1" ry="1.7" fill="#4f7fb6" opacity="0.89"/><ellipse cx="6.2" cy="4.4" rx="1.2" ry="2.9" fill="#5f8fc2" opacity="0.94"/><ellipse cx="92.9" cy="15.1" rx="2.5" ry="1.2" fill="#5d564f" opacity="0.84"/><ellipse cx="1.4" cy="22.1" rx="3.2" ry="0.8" fill="#5a9fc3" opacity="0.78"/><ellipse cx="99.7" cy="80.3" rx="1.2" ry="2.6" fill="#9bdad8" opacity="0.89"/><ellipse cx="50.1" cy="93.0" rx="2.7" ry="1.8" fill="#7b6f63" opacity="0.77"/><ellipse cx="65.2" cy="11.3" rx="2.3" ry="1.3" fill="#857868" opacity="0.73"/><ellipse cx="92.8" cy="50.4" rx="3.6" ry="2.6" fill="#7b6f63" opacity="0.65"/><ellipse cx="94.1" cy="49.0" rx="2.5" ry="1.3" fill="#6fb8c6" opacity="0.94"/><ellipse cx="68.2" cy="15.9" rx="2.1" ry="2.3" fill="#7b6f63" opacity="0.98"/><ellipse cx="95.3" cy="83.0" rx="1.4" ry="2.5" fill="#8fd3d4" opacity="0.90"/><ellipse cx="92.7" cy="1.6" rx="1.0" ry="1.8" fill="#6b6157" opacity="0.99"/><ellipse cx="92.0" cy="58.8" rx="1.1" ry="2.4" fill="#6aa3d0" opacity="0.99"/><ellipse cx="67.8" cy="99.9" rx="2.7" ry="2.7" fill="#4d6fa6" opacity="0.75"/><ellipse cx="95.7" cy="5.5" rx="1.3" ry="2.1" fill="#6fb8c6" opacity="0.77"/><ellipse cx="32.2" cy="18.8" rx="3.3" ry="1.1" fill="#8c8072" opacity="0.86"/><ellipse cx="13.6" cy="93.1" rx="1.1" ry="1.1" fill="#7b6f63" opacity="0.96"/><ellipse cx="43.1" cy="98.9" rx="3.0" ry="1.5" fill="#86c3df" opacity="0.84"/><ellipse cx="2.6" cy="2.0" rx="3.4" ry="0.9" fill="#7fb4e0" opacity="0.95"/><ellipse cx="98.1" cy="3.8" rx="2.1" ry="1.1" fill="#4f7fb6" opacity="0.66"/><ellipse cx="9.2" cy="88.4" rx="1.9" ry="2.2" fill="#6d9cd4" opacity="0.79"/><ellipse cx="95.9" cy="32.5" rx="2.0" ry="2.9" fill="#6b6157" opacity="0.96"/><ellipse cx="3.1" cy="63.7" rx="1.8" ry="2.8" fill="#8c8072" opacity="0.81"/><ellipse cx="3.6" cy="51.7" rx="2.6" ry="1.2" fill="#6aa3d0" opacity="0.91"/><ellipse cx="16.9" cy="91.6" rx="1.4" ry="2.1" fill="#86c3df" opacity="0.95"/><ellipse cx="95.2" cy="73.5" rx="3.5" ry="1.9" fill="#7fc7cc" opacity="0.70"/><ellipse cx="4.5" cy="20.3" rx="1.3" ry="1.8" fill="#5f8fc2" opacity="0.84"/><ellipse cx="68.5" cy="88.9" rx="1.2" ry="1.5" fill="#8c8072" opacity="0.66"/><ellipse cx="58.8" cy="10.8" rx="3.0" ry="1.4" fill="#5a9fc3" opacity="0.67"/><ellipse cx="5.5" cy="63.9" rx="2.9" ry="2.1" fill="#857868" opacity="0.69"/><ellipse cx="2.3" cy="58.4" rx="2.4" ry="1.6" fill="#5a9fc3" opacity="0.68"/><ellipse cx="16.2" cy="6.1" rx="2.6" ry="0.8" fill="#857868" opacity="0.69"/><ellipse cx="9.5" cy="34.0" rx="3.1" ry="2.2" fill="#5a9fc3" opacity="0.76"/><ellipse cx="4.1" cy="71.6" rx="1.5" ry="2.5" fill="#6b6157" opacity="0.68"/><ellipse cx="20.4" cy="2.1" rx="2.5" ry="1.3" fill="#4d6fa6" opacity="0.77"/><ellipse cx="74.7" cy="16.1" rx="1.7" ry="2.3" fill="#6b6157" opacity="0.71"/><ellipse cx="94.9" cy="64.3" rx="2.8" ry="2.2" fill="#7b6f63" opacity="0.97"/><ellipse cx="66.1" cy="93.3" rx="1.4" ry="1.3" fill="#5f8fc2" opacity="0.68"/><ellipse cx="94.1" cy="44.1" rx="2.0" ry="1.6" fill="#6fb8c6" opacity="0.68"/><ellipse cx="10.1" cy="15.0" rx="2.5" ry="2.7" fill="#7fb4e0" opacity="0.86"/><ellipse cx="9.8" cy="81.2" rx="1.8" ry="0.9" fill="#5d564f" opacity="0.68"/><ellipse cx="12.7" cy="6.2" rx="2.1" ry="2.5" fill="#4f7fb6" opacity="0.70"/><ellipse cx="22.0" cy="93.7" rx="3.3" ry="0.8" fill="#857868" opacity="0.72"/><ellipse cx="4.2" cy="2.9" rx="1.3" ry="2.4" fill="#4f7fb6" opacity="0.93"/><ellipse cx="2.8" cy="3.1" rx="2.9" ry="1.9" fill="#8c8072" opacity="0.84"/><ellipse cx="92.2" cy="92.6" rx="2.5" ry="1.9" fill="#8c8072" opacity="0.83"/><ellipse cx="98.4" cy="14.8" rx="1.8" ry="1.1" fill="#6fb8c6" opacity="0.95"/><ellipse cx="99.2" cy="76.3" rx="1.5" ry="1.4" fill="#6d9cd4" opacity="0.65"/><ellipse cx="86.1" cy="14.7" rx="2.5" ry="1.0" fill="#5d564f" opacity="0.99"/><ellipse cx="46.4" cy="94.7" rx="1.6" ry="0.8" fill="#7fb4e0" opacity="0.84"/><ellipse cx="7.6" cy="89.5" rx="3.5" ry="2.6" fill="#6b6157" opacity="0.99"/><ellipse cx="96.8" cy="10.6" rx="2.3" ry="1.2" fill="#5d564f" opacity="0.74"/><ellipse cx="11.1" cy="0.8" rx="2.3" ry="1.2" fill="#4d6fa6" opacity="1.00"/><ellipse cx="8.7" cy="83.1" rx="2.4" ry="1.7" fill="#86c3df" opacity="0.95"/><ellipse cx="27.2" cy="4.6" rx="3.1" ry="2.5" fill="#5f8fc2" opacity="0.97"/><ellipse cx="12.6" cy="90.6" rx="1.3" ry="1.1" fill="#5d564f" opacity="0.82"/><ellipse cx="5.2" cy="54.0" rx="3.1" ry="2.9" fill="#7fb4e0" opacity="0.82"/><ellipse cx="34.7" cy="8.1" rx="3.2" ry="1.3" fill="#86c3df" opacity="0.77"/><ellipse cx="92.1" cy="46.2" rx="2.0" ry="2.2" fill="#5d564f" opacity="0.83"/><ellipse cx="58.3" cy="15.1" rx="2.0" ry="1.8" fill="#4d6fa6" opacity="0.86"/><ellipse cx="6.8" cy="46.3" rx="2.1" ry="1.4" fill="#8c8072" opacity="0.67"/><ellipse cx="63.5" cy="90.0" rx="1.3" ry="2.8" fill="#6aa3d0" opacity="0.89"/><ellipse cx="97.2" cy="95.7" rx="0.9" ry="2.9" fill="#6fb8c6" opacity="0.74"/><ellipse cx="98.7" cy="94.4" rx="2.5" ry="2.3" fill="#7b6f63" opacity="0.80"/><ellipse cx="0.4" cy="8.1" rx="3.3" ry="2.7" fill="#5a9fc3" opacity="0.81"/><ellipse cx="96.0" cy="98.9" rx="1.4" ry="1.7" fill="#5d564f" opacity="0.66"/><ellipse cx="6.4" cy="11.7" rx="1.4" ry="1.8" fill="#857868" opacity="0.92"/><ellipse cx="43.5" cy="10.9" rx="3.5" ry="2.7" fill="#5f8fc2" opacity="0.92"/><ellipse cx="97.8" cy="89.1" rx="2.0" ry="1.3" fill="#8fd3d4" opacity="0.93"/><ellipse cx="9.3" cy="32.3" rx="0.9" ry="1.9" fill="#5a9fc3" opacity="0.74"/><ellipse cx="0.3" cy="20.1" rx="3.6" ry="1.7" fill="#5d564f" opacity="0.68"/><ellipse cx="3.5" cy="67.9" rx="2.9" ry="2.9" fill="#5a9fc3" opacity="0.73"/><ellipse cx="0.0" cy="15.0" rx="3.5" ry="1.6" fill="#6d9cd4" opacity="0.74"/><ellipse cx="10.1" cy="38.7" rx="3.4" ry="1.1" fill="#7ab6d6" opacity="0.78"/><ellipse cx="94.4" cy="22.4" rx="1.8" ry="1.1" fill="#6fb8c6" opacity="0.81"/><ellipse cx="11.1" cy="93.1" rx="2.3" ry="1.9" fill="#6b6157" opacity="0.81"/><ellipse cx="66.3" cy="5.1" rx="1.9" ry="2.1" fill="#86c3df" opacity="0.70"/><ellipse cx="95.3" cy="88.9" rx="1.3" ry="2.8" fill="#7b6f63" opacity="0.79"/><ellipse cx="61.2" cy="0.3" rx="1.0" ry="2.7" fill="#6aa3d0" opacity="0.82"/><ellipse cx="10.0" cy="67.5" rx="2.8" ry="2.8" fill="#7b6f63" opacity="0.81"/><ellipse cx="20.8" cy="12.2" rx="3.1" ry="1.5" fill="#7b6f63" opacity="0.94"/><ellipse cx="2.3" cy="40.3" rx="2.0" ry="1.6" fill="#86c3df" opacity="0.92"/><ellipse cx="6.5" cy="33.3" rx="3.0" ry="0.9" fill="#6d9cd4" opacity="0.92"/><ellipse cx="10.3" cy="16.3" rx="2.7" ry="2.3" fill="#7b6f63" opacity="0.67"/><ellipse cx="3.9" cy="36.5" rx="2.5" ry="1.6" fill="#8c8072" opacity="0.69"/><ellipse cx="95.5" cy="63.9" rx="3.0" ry="2.0" fill="#6b6157" opacity="0.68"/><ellipse cx="27.0" cy="7.7" rx="2.3" ry="0.9" fill="#7b6f63" opacity="0.71"/><ellipse cx="44.1" cy="17.6" rx="1.7" ry="2.6" fill="#5d564f" opacity="0.71"/><ellipse cx="99.7" cy="17.7" rx="1.0" ry="2.1" fill="#6fb8c6" opacity="0.69"/><ellipse cx="5.6" cy="45.1" rx="2.5" ry="1.1" fill="#6b6157" opacity="0.68"/><ellipse cx="48.1" cy="16.5" rx="2.1" ry="2.8" fill="#6b6157" opacity="0.66"/><ellipse cx="11.0" cy="30.3" rx="1.7" ry="2.3" fill="#5d564f" opacity="0.70"/><ellipse cx="25.9" cy="10.9" rx="2.6" ry="2.2" fill="#6d9cd4" opacity="0.70"/><ellipse cx="93.3" cy="37.1" rx="2.4" ry="2.3" fill="#6b6157" opacity="0.87"/><ellipse cx="20.7" cy="8.6" rx="3.3" ry="1.6" fill="#86c3df" opacity="0.80"/><ellipse cx="92.6" cy="88.8" rx="2.0" ry="1.3" fill="#8c8072" opacity="0.94"/><ellipse cx="0.6" cy="79.2" rx="2.5" ry="2.7" fill="#8c8072" opacity="0.79"/><ellipse cx="18.5" cy="89.5" rx="3.2" ry="1.2" fill="#8c8072" opacity="0.94"/><ellipse cx="63.6" cy="90.5" rx="2.4" ry="2.4" fill="#857868" opacity="0.65"/><ellipse cx="97.9" cy="98.7" rx="2.4" ry="2.0" fill="#7b6f63" opacity="0.86"/><ellipse cx="93.9" cy="29.8" rx="1.7" ry="2.7" fill="#8c8072" opacity="0.69"/><ellipse cx="98.8" cy="43.2" rx="0.9" ry="2.1" fill="#4d6fa6" opacity="0.66"/><ellipse cx="65.0" cy="0.0" rx="2.0" ry="1.6" fill="#4f7fb6" opacity="0.92"/><ellipse cx="93.4" cy="25.9" rx="3.4" ry="1.9" fill="#857868" opacity="0.68"/><ellipse cx="2.4" cy="45.5" rx="2.8" ry="2.4" fill="#5d564f" opacity="0.90"/><ellipse cx="99.0" cy="77.3" rx="1.9" ry="1.4" fill="#9bdad8" opacity="0.67"/><ellipse cx="99.4" cy="0.0" rx="1.4" ry="2.3" fill="#8fd3d4" opacity="0.69"/><ellipse cx="28.3" cy="12.0" rx="3.3" ry="1.6" fill="#6aa3d0" opacity="0.98"/><ellipse cx="93.4" cy="57.1" rx="2.8" ry="2.6" fill="#7b6f63" opacity="0.66"/><ellipse cx="73.0" cy="91.5" rx="3.6" ry="1.5" fill="#5f8fc2" opacity="0.71"/><ellipse cx="98.2" cy="32.6" rx="2.4" ry="0.9" fill="#9bdad8" opacity="0.85"/><ellipse cx="1.4" cy="87.7" rx="2.3" ry="1.2" fill="#7fb4e0" opacity="0.67"/><ellipse cx="6.1" cy="67.3" rx="1.6" ry="1.4" fill="#4f7fb6" opacity="0.77"/><ellipse cx="5.9" cy="60.2" rx="1.9" ry="2.9" fill="#5a9fc3" opacity="0.86"/><ellipse cx="39.1" cy="11.4" rx="3.2" ry="2.4" fill="#6b6157" opacity="0.80"/><ellipse cx="3.6" cy="29.5" rx="3.1" ry="1.7" fill="#6d9cd4" opacity="0.80"/><ellipse cx="97.3" cy="96.1" rx="1.2" ry="0.9" fill="#5f8fc2" opacity="0.85"/><ellipse cx="16.2" cy="3.0" rx="1.3" ry="2.3" fill="#86c3df" opacity="0.84"/><ellipse cx="8.3" cy="31.8" rx="2.6" ry="1.5" fill="#5a9fc3" opacity="0.74"/><ellipse cx="92.6" cy="90.3" rx="1.8" ry="2.7" fill="#5d564f" opacity="0.71"/><ellipse cx="4.9" cy="10.8" rx="2.8" ry="2.5" fill="#6b6157" opacity="0.77"/><ellipse cx="23.3" cy="14.9" rx="3.5" ry="2.6" fill="#7b6f63" opacity="0.95"/><ellipse cx="94.5" cy="16.3" rx="1.8" ry="1.9" fill="#6fb8c6" opacity="0.66"/><ellipse cx="39.5" cy="96.0" rx="0.9" ry="2.3" fill="#5a9fc3" opacity="0.75"/><ellipse cx="6.2" cy="18.9" rx="3.1" ry="2.8" fill="#6b6157" opacity="0.67"/><ellipse cx="96.2" cy="3.2" rx="2.7" ry="2.1" fill="#7fb4e0" opacity="0.78"/><ellipse cx="70.1" cy="97.1" rx="1.8" ry="2.5" fill="#7ab6d6" opacity="0.88"/><ellipse cx="65.8" cy="16.2" rx="1.6" ry="1.3" fill="#7b6f63" opacity="0.87"/><ellipse cx="43.2" cy="11.0" rx="2.8" ry="1.7" fill="#7b6f63" opacity="0.76"/><ellipse cx="87.6" cy="10.6" rx="1.8" ry="1.9" fill="#5d564f" opacity="0.88"/><ellipse cx="3.2" cy="16.9" rx="2.1" ry="1.3" fill="#86c3df" opacity="0.90"/><ellipse cx="8.2" cy="80.1" rx="2.7" ry="2.3" fill="#4f7fb6" opacity="0.80"/><ellipse cx="49.6" cy="0.6" rx="2.0" ry="0.9" fill="#5f8fc2" opacity="0.87"/><ellipse cx="96.4" cy="77.1" rx="3.5" ry="2.2" fill="#6fb8c6" opacity="1.00"/><ellipse cx="99.3" cy="57.3" rx="2.0" ry="2.5" fill="#6aa3d0" opacity="0.66"/><ellipse cx="18.1" cy="11.5" rx="1.8" ry="2.5" fill="#5d564f" opacity="1.00"/><ellipse cx="99.7" cy="17.8" rx="1.7" ry="2.8" fill="#6fb8c6" opacity="0.82"/><ellipse cx="98.8" cy="32.3" rx="1.7" ry="2.4" fill="#6b6157" opacity="0.68"/><ellipse cx="95.3" cy="88.3" rx="2.2" ry="2.7" fill="#7b6f63" opacity="0.88"/><ellipse cx="97.3" cy="44.1" rx="3.3" ry="1.4" fill="#6d9cd4" opacity="0.90"/><ellipse cx="8.7" cy="0.1" rx="1.9" ry="1.0" fill="#4f7fb6" opacity="0.94"/><ellipse cx="56.3" cy="10.1" rx="1.7" ry="1.1" fill="#8c8072" opacity="0.90"/><ellipse cx="9.2" cy="91.9" rx="1.3" ry="1.5" fill="#5f8fc2" opacity="0.81"/><ellipse cx="39.8" cy="9.2" rx="3.4" ry="1.1" fill="#5a9fc3" opacity="0.70"/><ellipse cx="93.0" cy="7.3" rx="2.7" ry="1.7" fill="#6fb8c6" opacity="0.98"/><ellipse cx="9.6" cy="98.4" rx="1.9" ry="2.2" fill="#6aa3d0" opacity="0.99"/><ellipse cx="36.2" cy="91.2" rx="3.5" ry="0.9" fill="#6aa3d0" opacity="0.67"/><ellipse cx="5.1" cy="15.1" rx="2.5" ry="0.9" fill="#857868" opacity="0.93"/><ellipse cx="98.7" cy="76.0" rx="3.6" ry="1.5" fill="#8fd3d4" opacity="0.94"/><ellipse cx="22.8" cy="88.4" rx="2.4" ry="1.2" fill="#7b6f63" opacity="0.87"/><ellipse cx="98.8" cy="48.1" rx="2.0" ry="1.4" fill="#4f7fb6" opacity="0.75"/><ellipse cx="83.5" cy="17.6" rx="1.1" ry="2.6" fill="#857868" opacity="0.81"/><ellipse cx="2.0" cy="6.5" rx="2.4" ry="1.9" fill="#5d564f" opacity="0.80"/><ellipse cx="75.9" cy="13.8" rx="2.0" ry="2.1" fill="#5d564f" opacity="0.67"/><ellipse cx="44.6" cy="5.0" rx="3.3" ry="2.9" fill="#5a9fc3" opacity="0.97"/><ellipse cx="67.2" cy="16.7" rx="3.1" ry="1.3" fill="#5d564f" opacity="0.95"/><ellipse cx="0.4" cy="53.5" rx="2.4" ry="2.5" fill="#6aa3d0" opacity="0.80"/><ellipse cx="5.8" cy="11.3" rx="1.6" ry="2.4" fill="#4d6fa6" opacity="0.82"/><ellipse cx="10.6" cy="1.7" rx="2.1" ry="2.4" fill="#7ab6d6" opacity="0.97"/><ellipse cx="9.3" cy="93.1" rx="2.2" ry="1.6" fill="#857868" opacity="0.75"/><ellipse cx="59.0" cy="4.1" rx="3.5" ry="1.0" fill="#86c3df" opacity="0.80"/><ellipse cx="12.6" cy="100.0" rx="1.1" ry="2.1" fill="#5f8fc2" opacity="0.76"/><ellipse cx="56.4" cy="3.1" rx="1.3" ry="1.5" fill="#6aa3d0" opacity="0.82"/><ellipse cx="96.8" cy="55.7" rx="1.7" ry="0.9" fill="#5d564f" opacity="0.91"/><ellipse cx="57.5" cy="93.8" rx="1.2" ry="1.8" fill="#86c3df" opacity="0.97"/><ellipse cx="92.4" cy="53.4" rx="2.0" ry="2.3" fill="#9bdad8" opacity="0.69"/><ellipse cx="11.3" cy="18.1" rx="3.1" ry="1.3" fill="#6b6157" opacity="0.72"/><ellipse cx="8.6" cy="98.4" rx="2.2" ry="1.8" fill="#5d564f" opacity="0.83"/><ellipse cx="83.6" cy="95.6" rx="3.3" ry="1.9" fill="#5f8fc2" opacity="0.85"/><ellipse cx="92.3" cy="68.1" rx="2.8" ry="1.0" fill="#8c8072" opacity="0.75"/><ellipse cx="10.6" cy="43.1" rx="3.3" ry="2.1" fill="#857868" opacity="0.90"/><ellipse cx="95.8" cy="41.7" rx="2.1" ry="1.3" fill="#6d9cd4" opacity="0.90"/><ellipse cx="29.5" cy="14.8" rx="2.7" ry="2.5" fill="#7b6f63" opacity="0.90"/><ellipse cx="71.3" cy="92.2" rx="1.2" ry="1.0" fill="#857868" opacity="0.94"/><ellipse cx="6.1" cy="51.6" rx="1.1" ry="1.3" fill="#4f7fb6" opacity="0.91"/><ellipse cx="93.7" cy="99.7" rx="2.2" ry="1.2" fill="#7fc7cc" opacity="0.99"/><ellipse cx="94.7" cy="94.6" rx="1.9" ry="2.2" fill="#6fb8c6" opacity="0.87"/><ellipse cx="2.3" cy="80.3" rx="1.1" ry="1.3" fill="#7ab6d6" opacity="0.81"/><ellipse cx="98.4" cy="52.7" rx="1.8" ry="2.7" fill="#5a9fc3" opacity="0.77"/><ellipse cx="45.6" cy="97.2" rx="2.1" ry="2.0" fill="#5f8fc2" opacity="0.94"/><ellipse cx="22.5" cy="89.4" rx="3.2" ry="2.6" fill="#6b6157" opacity="0.74"/><ellipse cx="8.4" cy="62.0" rx="1.5" ry="2.6" fill="#8c8072" opacity="0.96"/><ellipse cx="33.7" cy="93.7" rx="3.0" ry="2.1" fill="#8c8072" opacity="0.95"/><ellipse cx="5.2" cy="56.5" rx="1.3" ry="2.9" fill="#857868" opacity="0.92"/><ellipse cx="21.8" cy="2.3" rx="2.0" ry="1.3" fill="#86c3df" opacity="0.75"/><ellipse cx="99.2" cy="46.3" rx="1.3" ry="1.0" fill="#857868" opacity="0.93"/><ellipse cx="50.5" cy="88.5" rx="2.2" ry="2.2" fill="#6d9cd4" opacity="0.69"/><ellipse cx="52.0" cy="10.1" rx="2.4" ry="2.3" fill="#4d6fa6" opacity="0.70"/><ellipse cx="5.8" cy="40.5" rx="2.0" ry="2.9" fill="#6b6157" opacity="0.78"/><ellipse cx="19.6" cy="19.1" rx="1.7" ry="1.7" fill="#7ab6d6" opacity="0.89"/><ellipse cx="13.1" cy="94.8" rx="1.7" ry="2.8" fill="#8c8072" opacity="0.92"/><ellipse cx="3.2" cy="77.5" rx="0.9" ry="2.4" fill="#4d6fa6" opacity="0.82"/><ellipse cx="10.8" cy="90.0" rx="2.6" ry="1.6" fill="#7fb4e0" opacity="0.85"/><ellipse cx="11.0" cy="5.6" rx="1.5" ry="2.1" fill="#857868" opacity="0.83"/><ellipse cx="0.9" cy="6.6" rx="2.8" ry="2.7" fill="#4d6fa6" opacity="0.79"/><ellipse cx="4.9" cy="50.9" rx="1.2" ry="2.9" fill="#6b6157" opacity="0.70"/><ellipse cx="21.9" cy="20.0" rx="2.8" ry="2.1" fill="#7b6f63" opacity="0.73"/><ellipse cx="2.3" cy="21.0" rx="3.0" ry="1.2" fill="#4d6fa6" opacity="0.88"/><ellipse cx="74.8" cy="91.8" rx="2.1" ry="2.6" fill="#8c8072" opacity="0.66"/><ellipse cx="84.3" cy="99.4" rx="2.7" ry="1.7" fill="#7ab6d6" opacity="0.72"/><ellipse cx="97.2" cy="5.0" rx="2.9" ry="1.8" fill="#6fb8c6" opacity="0.83"/><ellipse cx="19.1" cy="96.9" rx="2.9" ry="2.7" fill="#4f7fb6" opacity="0.94"/><ellipse cx="98.0" cy="80.0" rx="3.0" ry="1.9" fill="#7fc7cc" opacity="0.82"/><ellipse cx="0.2" cy="41.1" rx="0.9" ry="1.9" fill="#6aa3d0" opacity="0.95"/><ellipse cx="96.6" cy="4.5" rx="1.0" ry="2.7" fill="#6d9cd4" opacity="0.87"/><ellipse cx="27.2" cy="4.8" rx="2.9" ry="2.5" fill="#86c3df" opacity="0.74"/><ellipse cx="99.9" cy="12.6" rx="1.5" ry="2.3" fill="#8fd3d4" opacity="0.87"/><ellipse cx="8.5" cy="41.7" rx="2.2" ry="2.7" fill="#6d9cd4" opacity="0.83"/><ellipse cx="89.6" cy="94.3" rx="1.8" ry="2.3" fill="#5d564f" opacity="0.95"/><ellipse cx="93.2" cy="6.4" rx="2.1" ry="1.7" fill="#5d564f" opacity="0.89"/><ellipse cx="5.2" cy="88.1" rx="2.2" ry="2.9" fill="#7ab6d6" opacity="0.68"/><ellipse cx="3.2" cy="5.1" rx="3.4" ry="2.7" fill="#4f7fb6" opacity="0.66"/><ellipse cx="5.7" cy="97.9" rx="2.5" ry="2.3" fill="#86c3df" opacity="0.65"/><ellipse cx="55.2" cy="13.2" rx="1.4" ry="1.1" fill="#7b6f63" opacity="0.73"/><ellipse cx="92.6" cy="92.5" rx="1.9" ry="1.1" fill="#8fd3d4" opacity="0.76"/><ellipse cx="5.2" cy="35.9" rx="1.5" ry="2.6" fill="#4f7fb6" opacity="0.96"/><ellipse cx="11.7" cy="94.1" rx="1.5" ry="3.0" fill="#86c3df" opacity="0.79"/><ellipse cx="93.0" cy="16.8" rx="1.2" ry="1.1" fill="#7b6f63" opacity="0.96"/><ellipse cx="43.9" cy="94.4" rx="2.4" ry="2.4" fill="#4f7fb6" opacity="0.75"/><ellipse cx="58.0" cy="95.5" rx="1.4" ry="3.0" fill="#7b6f63" opacity="0.76"/><ellipse cx="97.3" cy="98.1" rx="1.7" ry="1.4" fill="#7ab6d6" opacity="0.80"/><ellipse cx="92.7" cy="75.6" rx="3.2" ry="2.2" fill="#7ab6d6" opacity="0.93"/><ellipse cx="94.1" cy="11.0" rx="1.3" ry="1.4" fill="#7ab6d6" opacity="0.81"/><ellipse cx="7.9" cy="43.2" rx="1.5" ry="2.0" fill="#6aa3d0" opacity="0.93"/><ellipse cx="98.7" cy="6.4" rx="3.4" ry="2.3" fill="#6fb8c6" opacity="0.89"/><ellipse cx="99.8" cy="8.6" rx="0.9" ry="0.9" fill="#8fd3d4" opacity="0.76"/><ellipse cx="64.6" cy="6.0" rx="2.4" ry="0.8" fill="#5d564f" opacity="0.68"/><ellipse cx="71.2" cy="0.9" rx="1.5" ry="3.0" fill="#7fb4e0" opacity="0.95"/><ellipse cx="6.1" cy="22.4" rx="2.8" ry="1.4" fill="#86c3df" opacity="0.78"/><ellipse cx="93.7" cy="92.3" rx="2.1" ry="1.1" fill="#7fc7cc" opacity="0.93"/><ellipse cx="100.0" cy="41.3" rx="3.5" ry="0.9" fill="#7fc7cc" opacity="0.81"/><ellipse cx="92.8" cy="19.5" rx="1.0" ry="1.0" fill="#6d9cd4" opacity="1.00"/><ellipse cx="9.6" cy="82.1" rx="2.2" ry="1.2" fill="#7ab6d6" opacity="0.94"/><ellipse cx="4.8" cy="7.8" rx="1.1" ry="1.9" fill="#7ab6d6" opacity="0.90"/><ellipse cx="96.0" cy="57.1" rx="1.4" ry="1.6" fill="#7fc7cc" opacity="0.78"/><ellipse cx="42.6" cy="97.0" rx="3.0" ry="0.8" fill="#86c3df" opacity="0.70"/><ellipse cx="5.6" cy="86.1" rx="2.3" ry="2.6" fill="#6b6157" opacity="0.90"/><ellipse cx="14.7" cy="11.7" rx="2.9" ry="1.4" fill="#8c8072" opacity="0.68"/><ellipse cx="94.5" cy="43.9" rx="1.4" ry="2.2" fill="#5d564f" opacity="0.84"/><ellipse cx="95.8" cy="61.4" rx="3.4" ry="0.9" fill="#5d564f" opacity="0.79"/><ellipse cx="26.9" cy="2.1" rx="3.1" ry="1.2" fill="#4d6fa6" opacity="0.76"/><ellipse cx="10.6" cy="65.7" rx="1.9" ry="2.6" fill="#86c3df" opacity="0.71"/><ellipse cx="4.4" cy="0.2" rx="1.6" ry="1.7" fill="#5d564f" opacity="0.93"/><ellipse cx="9.5" cy="84.2" rx="2.1" ry="2.8" fill="#5a9fc3" opacity="0.90"/><ellipse cx="50.1" cy="4.1" rx="2.4" ry="1.0" fill="#4f7fb6" opacity="0.74"/><ellipse cx="98.8" cy="56.5" rx="3.0" ry="1.2" fill="#6aa3d0" opacity="0.89"/><ellipse cx="62.2" cy="91.4" rx="3.2" ry="1.2" fill="#5d564f" opacity="0.90"/><ellipse cx="2.1" cy="88.3" rx="2.5" ry="1.6" fill="#7ab6d6" opacity="0.76"/><ellipse cx="29.3" cy="10.7" rx="2.6" ry="2.9" fill="#857868" opacity="0.90"/><ellipse cx="16.2" cy="98.0" rx="3.3" ry="2.3" fill="#7ab6d6" opacity="0.67"/><ellipse cx="45.3" cy="92.7" rx="2.0" ry="1.7" fill="#7fb4e0" opacity="0.90"/><ellipse cx="98.1" cy="90.3" rx="1.4" ry="2.1" fill="#4d6fa6" opacity="0.74"/><ellipse cx="84.6" cy="93.4" rx="1.4" ry="2.4" fill="#5d564f" opacity="0.86"/><ellipse cx="4.9" cy="9.5" rx="1.2" ry="2.1" fill="#857868" opacity="0.90"/><ellipse cx="3.7" cy="66.2" rx="2.3" ry="2.8" fill="#4d6fa6" opacity="0.87"/><ellipse cx="35.6" cy="95.7" rx="2.1" ry="1.9" fill="#4d6fa6" opacity="0.69"/><ellipse cx="84.0" cy="95.6" rx="2.5" ry="1.0" fill="#7b6f63" opacity="0.66"/><ellipse cx="59.2" cy="1.5" rx="2.4" ry="1.3" fill="#7ab6d6" opacity="0.91"/><ellipse cx="97.3" cy="28.0" rx="2.3" ry="2.6" fill="#6fb8c6" opacity="0.88"/><ellipse cx="94.0" cy="55.8" rx="1.6" ry="2.1" fill="#8c8072" opacity="0.68"/><ellipse cx="66.5" cy="92.1" rx="1.5" ry="1.7" fill="#8c8072" opacity="0.83"/><ellipse cx="38.7" cy="90.5" rx="1.2" ry="1.4" fill="#5a9fc3" opacity="0.98"/><ellipse cx="28.2" cy="88.6" rx="3.3" ry="1.0" fill="#7ab6d6" opacity="0.86"/><ellipse cx="2.9" cy="14.0" rx="1.3" ry="2.6" fill="#4d6fa6" opacity="0.83"/><ellipse cx="10.0" cy="92.8" rx="1.5" ry="1.1" fill="#7ab6d6" opacity="0.93"/><ellipse cx="99.0" cy="4.5" rx="1.4" ry="0.9" fill="#7fc7cc" opacity="0.97"/><ellipse cx="0.7" cy="22.7" rx="1.0" ry="1.0" fill="#7b6f63" opacity="0.77"/><ellipse cx="0.5" cy="50.0" rx="3.4" ry="2.7" fill="#6aa3d0" opacity="0.89"/><ellipse cx="9.5" cy="9.6" rx="3.4" ry="2.9" fill="#7fb4e0" opacity="0.92"/><ellipse cx="61.8" cy="90.3" rx="2.0" ry="1.2" fill="#8c8072" opacity="0.75"/><ellipse cx="99.6" cy="18.3" rx="2.8" ry="2.5" fill="#6fb8c6" opacity="0.90"/><ellipse cx="88.9" cy="98.2" rx="2.9" ry="1.1" fill="#5f8fc2" opacity="0.77"/><ellipse cx="52.3" cy="98.8" rx="1.0" ry="2.2" fill="#5a9fc3" opacity="0.92"/><ellipse cx="92.1" cy="80.3" rx="2.1" ry="1.9" fill="#6b6157" opacity="0.91"/><ellipse cx="49.5" cy="1.2" rx="1.2" ry="2.0" fill="#5a9fc3" opacity="0.82"/><ellipse cx="2.0" cy="10.1" rx="1.4" ry="2.7" fill="#4f7fb6" opacity="0.95"/><ellipse cx="64.1" cy="15.0" rx="1.2" ry="1.2" fill="#4d6fa6" opacity="0.97"/><ellipse cx="35.7" cy="7.2" rx="1.5" ry="0.8" fill="#5f8fc2" opacity="0.84"/><ellipse cx="51.0" cy="6.3" rx="2.5" ry="2.4" fill="#5d564f" opacity="0.82"/><ellipse cx="11.6" cy="19.6" rx="1.5" ry="2.3" fill="#5d564f" opacity="0.66"/><ellipse cx="27.1" cy="9.0" rx="3.0" ry="1.7" fill="#6b6157" opacity="0.67"/><ellipse cx="66.1" cy="95.6" rx="1.2" ry="2.6" fill="#7ab6d6" opacity="0.81"/><ellipse cx="60.6" cy="90.5" rx="3.0" ry="2.7" fill="#5f8fc2" opacity="0.99"/><ellipse cx="94.0" cy="7.9" rx="3.1" ry="1.7" fill="#7b6f63" opacity="0.87"/><ellipse cx="97.0" cy="85.8" rx="2.9" ry="2.6" fill="#6fb8c6" opacity="0.88"/><ellipse cx="62.7" cy="2.6" rx="1.3" ry="1.6" fill="#857868" opacity="0.95"/><ellipse cx="96.7" cy="70.9" rx="3.3" ry="2.1" fill="#7fc7cc" opacity="0.82"/><ellipse cx="39.0" cy="8.4" rx="3.4" ry="1.7" fill="#6b6157" opacity="0.94"/><ellipse cx="4.6" cy="89.9" rx="1.6" ry="3.0" fill="#7ab6d6" opacity="0.77"/><ellipse cx="9.4" cy="14.8" rx="3.3" ry="0.9" fill="#7b6f63" opacity="0.98"/><ellipse cx="1.2" cy="13.2" rx="2.5" ry="2.0" fill="#7ab6d6" opacity="0.90"/><ellipse cx="94.6" cy="61.6" rx="3.5" ry="1.0" fill="#5d564f" opacity="0.77"/><ellipse cx="82.9" cy="99.7" rx="1.2" ry="2.4" fill="#6b6157" opacity="0.81"/><ellipse cx="70.1" cy="15.7" rx="1.1" ry="2.9" fill="#8fd3d4" opacity="0.90"/><ellipse cx="40.5" cy="20.8" rx="2.4" ry="1.6" fill="#86c3df" opacity="0.91"/><ellipse cx="94.5" cy="82.2" rx="3.4" ry="2.4" fill="#4f7fb6" opacity="0.80"/><ellipse cx="8.5" cy="95.6" rx="1.9" ry="2.8" fill="#8c8072" opacity="0.70"/><ellipse cx="97.9" cy="71.4" rx="2.7" ry="2.0" fill="#9bdad8" opacity="0.80"/><ellipse cx="94.7" cy="71.8" rx="3.3" ry="0.8" fill="#8c8072" opacity="0.97"/><ellipse cx="64.4" cy="13.9" rx="3.2" ry="2.3" fill="#6b6157" opacity="0.84"/><ellipse cx="92.8" cy="75.4" rx="2.6" ry="2.4" fill="#6b6157" opacity="0.82"/><ellipse cx="93.3" cy="61.3" rx="3.5" ry="2.2" fill="#5d564f" opacity="0.72"/><ellipse cx="56.6" cy="88.6" rx="3.1" ry="1.0" fill="#857868" opacity="0.93"/><ellipse cx="18.9" cy="15.3" rx="1.9" ry="1.9" fill="#6b6157" opacity="0.87"/><ellipse cx="7.0" cy="91.0" rx="3.0" ry="2.0" fill="#5d564f" opacity="0.97"/><ellipse cx="18.9" cy="95.0" rx="2.5" ry="2.7" fill="#6aa3d0" opacity="0.74"/><ellipse cx="98.7" cy="79.5" rx="3.3" ry="2.2" fill="#8fd3d4" opacity="0.69"/><ellipse cx="9.5" cy="87.0" rx="1.2" ry="2.7" fill="#857868" opacity="0.92"/><ellipse cx="99.6" cy="14.6" rx="2.7" ry="1.4" fill="#9bdad8" opacity="0.94"/><ellipse cx="99.0" cy="72.5" rx="1.1" ry="1.5" fill="#7ab6d6" opacity="0.98"/><ellipse cx="11.0" cy="22.2" rx="3.4" ry="1.6" fill="#857868" opacity="0.99"/><ellipse cx="68.8" cy="2.9" rx="3.4" ry="2.7" fill="#5d564f" opacity="0.95"/><ellipse cx="28.7" cy="95.6" rx="3.0" ry="1.5" fill="#5d564f" opacity="0.67"/><ellipse cx="1.1" cy="69.1" rx="2.3" ry="0.9" fill="#6aa3d0" opacity="0.79"/><ellipse cx="28.5" cy="5.7" rx="2.4" ry="3.0" fill="#7fb4e0" opacity="0.70"/><ellipse cx="5.2" cy="76.0" rx="3.1" ry="1.7" fill="#5f8fc2" opacity="0.71"/><ellipse cx="94.8" cy="6.0" rx="2.1" ry="2.5" fill="#4d6fa6" opacity="0.68"/><ellipse cx="7.6" cy="43.8" rx="2.8" ry="0.9" fill="#8c8072" opacity="0.77"/><ellipse cx="98.7" cy="92.5" rx="2.0" ry="2.5" fill="#8fd3d4" opacity="0.77"/><ellipse cx="18.2" cy="89.0" rx="3.5" ry="2.6" fill="#6d9cd4" opacity="0.69"/><ellipse cx="4.0" cy="9.9" rx="2.6" ry="1.1" fill="#857868" opacity="0.89"/><ellipse cx="76.8" cy="98.8" rx="3.1" ry="1.4" fill="#5a9fc3" opacity="0.96"/><ellipse cx="3.9" cy="11.4" rx="2.1" ry="2.0" fill="#6d9cd4" opacity="0.79"/><ellipse cx="94.4" cy="27.2" rx="1.1" ry="2.3" fill="#7fc7cc" opacity="0.68"/><ellipse cx="99.8" cy="32.4" rx="1.1" ry="1.5" fill="#6fb8c6" opacity="0.85"/><rect x="11.2" y="21.1" width="80.8" height="67.2" fill="url(#gSky)"/><g clip-path="url(#cSky)"><ellipse cx="33.8" cy="68.2" rx="9.4" ry="0.9" fill="#5050b8" opacity="0.49"/><ellipse cx="48.0" cy="46.8" rx="9.2" ry="1.0" fill="#3d97f0" opacity="0.55"/><ellipse cx="51.9" cy="28.0" rx="8.1" ry="1.2" fill="#123aa0" opacity="0.51"/><ellipse cx="22.9" cy="44.2" rx="3.2" ry="0.8" fill="#9ad4fa" opacity="0.77"/><ellipse cx="82.5" cy="46.5" rx="7.1" ry="0.8" fill="#0a2474" opacity="0.80"/><ellipse cx="60.8" cy="78.5" rx="4.1" ry="0.7" fill="#5050b8" opacity="0.70"/><ellipse cx="90.0" cy="38.9" rx="8.2" ry="0.7" fill="#1450c0" opacity="0.55"/><ellipse cx="29.2" cy="77.1" rx="7.5" ry="0.5" fill="#5a7ae0" opacity="0.68"/><ellipse cx="37.0" cy="67.9" rx="10.4" ry="1.2" fill="#6a8ae8" opacity="0.76"/><ellipse cx="72.5" cy="24.2" rx="9.7" ry="1.2" fill="#123aa0" opacity="0.89"/><ellipse cx="13.8" cy="28.1" rx="6.3" ry="0.7" fill="#7cc6f8" opacity="0.68"/><ellipse cx="69.8" cy="60.3" rx="9.3" ry="0.6" fill="#7078d8" opacity="0.63"/><ellipse cx="74.0" cy="49.6" rx="3.9" ry="1.2" fill="#123aa0" opacity="0.84"/><ellipse cx="36.5" cy="32.0" rx="8.3" ry="0.9" fill="#7cc6f8" opacity="0.79"/><ellipse cx="30.7" cy="24.6" rx="6.4" ry="0.8" fill="#3d97f0" opacity="0.66"/><ellipse cx="31.3" cy="42.9" rx="5.4" ry="1.0" fill="#2a86ec" opacity="0.61"/><ellipse cx="40.8" cy="79.5" rx="4.9" ry="0.9" fill="#9098ea" opacity="0.62"/><ellipse cx="77.0" cy="29.6" rx="7.4" ry="0.9" fill="#56b0f6" opacity="0.88"/><ellipse cx="66.3" cy="75.3" rx="8.1" ry="1.2" fill="#4a5cc8" opacity="0.68"/><ellipse cx="72.5" cy="69.6" rx="4.3" ry="0.9" fill="#5050b8" opacity="0.71"/><ellipse cx="43.4" cy="33.1" rx="8.1" ry="0.6" fill="#123aa0" opacity="0.84"/><ellipse cx="43.1" cy="47.8" rx="9.1" ry="0.5" fill="#1450c0" opacity="0.49"/><ellipse cx="24.2" cy="79.6" rx="8.6" ry="0.8" fill="#8a92e8" opacity="0.86"/><ellipse cx="78.7" cy="28.3" rx="4.1" ry="1.0" fill="#3d97f0" opacity="0.54"/><ellipse cx="58.6" cy="82.9" rx="2.8" ry="0.8" fill="#7078d8" opacity="0.64"/><ellipse cx="72.2" cy="26.5" rx="5.9" ry="1.0" fill="#2a86ec" opacity="0.53"/><ellipse cx="28.9" cy="33.9" rx="3.8" ry="0.5" fill="#7cc6f8" opacity="0.84"/><ellipse cx="27.6" cy="38.0" rx="9.0" ry="1.2" fill="#0d2f8c" opacity="0.48"/><ellipse cx="47.8" cy="81.4" rx="6.2" ry="0.7" fill="#8a92e8" opacity="0.79"/><ellipse cx="14.8" cy="62.4" rx="2.8" ry="1.1" fill="#5a7ae0" opacity="0.61"/><ellipse cx="40.1" cy="37.5" rx="7.3" ry="0.9" fill="#7cc6f8" opacity="0.80"/><ellipse cx="39.9" cy="60.7" rx="3.9" ry="1.2" fill="#5050b8" opacity="0.74"/><ellipse cx="24.0" cy="30.0" rx="4.3" ry="1.1" fill="#7cc6f8" opacity="0.62"/><ellipse cx="86.5" cy="61.4" rx="4.6" ry="1.2" fill="#4a5cc8" opacity="0.81"/><ellipse cx="12.5" cy="30.1" rx="3.6" ry="1.0" fill="#7cc6f8" opacity="0.68"/><ellipse cx="50.5" cy="82.2" rx="10.5" ry="1.0" fill="#7078d8" opacity="0.55"/><ellipse cx="76.9" cy="67.8" rx="10.3" ry="0.9" fill="#8a92e8" opacity="0.72"/><ellipse cx="30.2" cy="32.3" rx="9.9" ry="1.1" fill="#9ad4fa" opacity="0.88"/><ellipse cx="59.3" cy="44.8" rx="5.8" ry="0.5" fill="#0a2474" opacity="0.88"/><ellipse cx="82.8" cy="80.4" rx="4.5" ry="1.0" fill="#4a5cc8" opacity="0.55"/><ellipse cx="87.2" cy="37.2" rx="8.2" ry="0.8" fill="#0a2474" opacity="0.54"/><ellipse cx="13.5" cy="61.9" rx="2.5" ry="1.1" fill="#4a5cc8" opacity="0.80"/><ellipse cx="76.9" cy="27.1" rx="4.2" ry="1.2" fill="#3d97f0" opacity="0.56"/><ellipse cx="48.3" cy="58.1" rx="8.0" ry="1.0" fill="#6a8ae8" opacity="0.71"/><ellipse cx="31.3" cy="76.7" rx="9.6" ry="0.9" fill="#4a5cc8" opacity="0.59"/><ellipse cx="55.6" cy="30.6" rx="10.4" ry="0.6" fill="#0a2474" opacity="0.71"/><ellipse cx="38.9" cy="31.5" rx="2.9" ry="1.2" fill="#0a2474" opacity="0.85"/><ellipse cx="17.4" cy="43.8" rx="6.6" ry="0.9" fill="#3d97f0" opacity="0.58"/><ellipse cx="54.9" cy="30.3" rx="3.1" ry="1.0" fill="#3d97f0" opacity="0.83"/><ellipse cx="41.8" cy="45.7" rx="7.5" ry="0.9" fill="#1450c0" opacity="0.49"/><ellipse cx="25.0" cy="67.5" rx="9.5" ry="0.6" fill="#8a92e8" opacity="0.79"/><ellipse cx="22.4" cy="44.9" rx="4.8" ry="0.7" fill="#0a2474" opacity="0.72"/><ellipse cx="78.1" cy="69.5" rx="9.8" ry="0.6" fill="#5050b8" opacity="0.84"/><ellipse cx="91.7" cy="45.0" rx="7.1" ry="0.6" fill="#56b0f6" opacity="0.51"/><ellipse cx="18.4" cy="76.3" rx="4.2" ry="0.7" fill="#8a92e8" opacity="0.53"/><ellipse cx="51.9" cy="72.2" rx="10.2" ry="1.2" fill="#5a7ae0" opacity="0.61"/><ellipse cx="41.6" cy="80.8" rx="8.3" ry="0.6" fill="#8a92e8" opacity="0.77"/><ellipse cx="51.8" cy="73.4" rx="7.2" ry="0.7" fill="#4a5cc8" opacity="0.58"/><ellipse cx="44.6" cy="31.3" rx="9.7" ry="0.7" fill="#9ad4fa" opacity="0.47"/><ellipse cx="72.8" cy="25.9" rx="4.2" ry="0.8" fill="#56b0f6" opacity="0.71"/><ellipse cx="77.4" cy="47.5" rx="7.9" ry="0.5" fill="#7cc6f8" opacity="0.85"/><ellipse cx="82.6" cy="49.9" rx="10.9" ry="0.8" fill="#56b0f6" opacity="0.66"/><ellipse cx="21.1" cy="27.1" rx="5.3" ry="0.9" fill="#3d97f0" opacity="0.71"/><ellipse cx="20.0" cy="39.6" rx="6.1" ry="1.2" fill="#0a2474" opacity="0.84"/><ellipse cx="54.4" cy="72.0" rx="7.6" ry="0.5" fill="#9098ea" opacity="0.60"/><ellipse cx="61.8" cy="39.3" rx="2.9" ry="0.8" fill="#123aa0" opacity="0.54"/><ellipse cx="78.9" cy="45.5" rx="8.0" ry="1.2" fill="#9ad4fa" opacity="0.47"/><ellipse cx="50.7" cy="49.2" rx="7.8" ry="0.8" fill="#56b0f6" opacity="0.49"/><ellipse cx="58.6" cy="51.6" rx="8.4" ry="0.6" fill="#7cc6f8" opacity="0.51"/><ellipse cx="25.7" cy="57.6" rx="5.3" ry="1.1" fill="#5a7ae0" opacity="0.71"/><ellipse cx="77.9" cy="45.1" rx="10.0" ry="1.0" fill="#9ad4fa" opacity="0.89"/><ellipse cx="84.4" cy="61.9" rx="8.6" ry="1.0" fill="#4a5cc8" opacity="0.74"/><ellipse cx="83.4" cy="28.2" rx="8.5" ry="1.2" fill="#0d2f8c" opacity="0.76"/><ellipse cx="91.7" cy="48.2" rx="6.7" ry="0.9" fill="#9ad4fa" opacity="0.66"/><ellipse cx="45.6" cy="52.9" rx="3.2" ry="1.0" fill="#5050b8" opacity="0.60"/><ellipse cx="77.3" cy="45.7" rx="7.0" ry="0.7" fill="#9ad4fa" opacity="0.62"/><ellipse cx="45.3" cy="62.4" rx="2.6" ry="0.5" fill="#9098ea" opacity="0.50"/><ellipse cx="35.5" cy="42.9" rx="7.0" ry="1.2" fill="#1450c0" opacity="0.64"/><ellipse cx="69.2" cy="68.3" rx="5.5" ry="1.2" fill="#9098ea" opacity="0.75"/><ellipse cx="40.0" cy="71.5" rx="3.9" ry="1.1" fill="#8a92e8" opacity="0.82"/><ellipse cx="48.1" cy="63.5" rx="5.2" ry="0.8" fill="#4a5cc8" opacity="0.63"/><ellipse cx="36.4" cy="42.9" rx="3.7" ry="0.7" fill="#3d97f0" opacity="0.55"/><ellipse cx="87.1" cy="58.3" rx="10.0" ry="0.6" fill="#9098ea" opacity="0.56"/><ellipse cx="38.6" cy="61.3" rx="9.0" ry="0.7" fill="#9098ea" opacity="0.51"/><ellipse cx="57.8" cy="21.8" rx="3.6" ry="0.6" fill="#2a86ec" opacity="0.54"/><ellipse cx="66.4" cy="25.8" rx="3.3" ry="0.9" fill="#9ad4fa" opacity="0.89"/><ellipse cx="21.0" cy="56.3" rx="8.7" ry="0.6" fill="#5050b8" opacity="0.83"/><ellipse cx="77.1" cy="75.2" rx="6.9" ry="1.1" fill="#5050b8" opacity="0.77"/><ellipse cx="24.1" cy="37.7" rx="8.5" ry="1.1" fill="#0a2474" opacity="0.71"/><ellipse cx="75.3" cy="57.0" rx="8.5" ry="1.1" fill="#9098ea" opacity="0.76"/><ellipse cx="68.1" cy="25.2" rx="10.4" ry="0.7" fill="#2a86ec" opacity="0.61"/><ellipse cx="13.9" cy="26.8" rx="7.0" ry="0.7" fill="#0d2f8c" opacity="0.65"/><ellipse cx="90.0" cy="50.2" rx="9.8" ry="0.6" fill="#3d97f0" opacity="0.67"/><ellipse cx="36.0" cy="35.5" rx="2.7" ry="1.0" fill="#0d2f8c" opacity="0.89"/><ellipse cx="28.9" cy="79.7" rx="9.6" ry="1.2" fill="#4a5cc8" opacity="0.58"/><ellipse cx="75.8" cy="34.8" rx="3.9" ry="2.0" fill="#f4f6fa" opacity="0.73"/><ellipse cx="70.8" cy="28.1" rx="2.9" ry="3.0" fill="#f4f6fa" opacity="0.92"/><ellipse cx="79.1" cy="22.5" rx="3.1" ry="1.8" fill="#f4f6fa" opacity="0.94"/><ellipse cx="85.0" cy="34.8" rx="2.1" ry="1.8" fill="#f4f6fa" opacity="0.92"/><ellipse cx="79.6" cy="29.7" rx="2.6" ry="1.9" fill="#f4f6fa" opacity="0.90"/><ellipse cx="86.7" cy="34.3" rx="2.3" ry="1.4" fill="#f4f6fa" opacity="0.89"/><ellipse cx="88.4" cy="27.2" rx="3.9" ry="1.7" fill="#f4f6fa" opacity="0.74"/><ellipse cx="67.8" cy="31.0" rx="2.7" ry="2.4" fill="#f4f6fa" opacity="0.72"/><ellipse cx="75.7" cy="30.1" rx="3.5" ry="2.3" fill="#f4f6fa" opacity="0.93"/><ellipse cx="76.0" cy="22.8" rx="3.2" ry="2.4" fill="#f4f6fa" opacity="0.95"/><ellipse cx="82.5" cy="28.3" rx="2.0" ry="1.4" fill="#f4f6fa" opacity="0.92"/><ellipse cx="75.4" cy="36.7" rx="3.0" ry="2.5" fill="#f4f6fa" opacity="0.73"/><ellipse cx="70.8" cy="27.1" rx="3.9" ry="1.4" fill="#f4f6fa" opacity="0.93"/><ellipse cx="71.1" cy="35.6" rx="2.2" ry="1.5" fill="#f4f6fa" opacity="0.91"/><ellipse cx="71.8" cy="36.9" rx="2.5" ry="1.9" fill="#f4f6fa" opacity="0.89"/><ellipse cx="67.4" cy="30.4" rx="2.6" ry="1.8" fill="#f4f6fa" opacity="0.93"/><ellipse cx="84.1" cy="27.9" rx="3.5" ry="3.0" fill="#f4f6fa" opacity="0.91"/><ellipse cx="83.1" cy="26.8" rx="2.0" ry="1.6" fill="#f4f6fa" opacity="0.99"/><ellipse cx="77.5" cy="37.5" rx="2.4" ry="2.2" fill="#f4f6fa" opacity="0.77"/><ellipse cx="88.3" cy="24.3" rx="4.1" ry="2.0" fill="#f4f6fa" opacity="0.81"/><ellipse cx="87.6" cy="32.1" rx="3.3" ry="2.1" fill="#f4f6fa" opacity="0.86"/><ellipse cx="71.3" cy="33.9" rx="3.4" ry="2.9" fill="#f4f6fa" opacity="0.70"/><ellipse cx="83.2" cy="27.1" rx="3.6" ry="1.5" fill="#f4f6fa" opacity="0.88"/><ellipse cx="71.4" cy="31.7" rx="3.3" ry="1.6" fill="#f4f6fa" opacity="0.81"/><path d="M70.5 36 C72.5 44 71 50 68.4 57 L70 57.4 C73 50 76 44 74.5 36 Z" fill="#eef2f8" opacity="0.92"/><circle cx="83.4" cy="56" r="4.1" fill="#fbf9e2"/><path d="M62 88.3 L79.8 69 L92 80.6 L92 88.3 Z" fill="#10131f"/><path d="M54 88.3 L60.4 81.2 L66.5 88.3 Z" fill="#10131f"/><rect x="11.2" y="85.4" width="80.8" height="2.9" fill="#0c0e1a"/><path d="M15.8 88.3 C15.2 80 16 72 19.4 65.4 C18.4 61.4 18.6 57.4 19.4 55 L19.6 49.4 L23.2 53.6 L28.4 53.6 L32.4 49.2 L32.6 57 C32.4 60 32 62 31 64 C37 69 41.4 78 42 88.3 Z" fill="url(#gCat)"/></g><circle cx="24.7" cy="33.8" r="6.9" fill="none" stroke="#f2a21e" stroke-width="2"/><text x="34" y="36.4" font-family="Liberation Serif,serif" font-size="6.6" font-weight="bold" fill="#ee9a1c" textLength="23" lengthAdjust="spacingAndGlyphs">ZRIC</text><text x="34.6" y="44.6" font-family="Liberation Serif,serif" font-size="5.2" font-weight="bold" fill="#c9b45a" textLength="28" lengthAdjust="spacingAndGlyphs">TENTACLES</text><ellipse cx="52.2" cy="9.8" rx="5.4" ry="6.9" fill="#b9b8ae" stroke="#35322e" stroke-width="1.8"/><ellipse cx="51.2" cy="8.4" rx="2.5" ry="3.3" fill="#efeee6"/><rect x="4.0" y="92.9" width="1.0" height="3.8" fill="#eef2f6" opacity="0.53"/><rect x="6.0" y="92.4" width="1.4" height="4.2" fill="#eef2f6" opacity="0.71"/><rect x="8.2" y="93.0" width="1.6" height="4.5" fill="#eef2f6" opacity="0.94"/><rect x="10.9" y="92.6" width="1.1" height="5.2" fill="#eef2f6" opacity="0.58"/><rect x="12.8" y="93.1" width="0.9" height="4.4" fill="#eef2f6" opacity="0.66"/><rect x="15.2" y="92.2" width="1.6" height="5.1" fill="#eef2f6" opacity="0.90"/><rect x="17.2" y="92.5" width="1.1" height="4.9" fill="#eef2f6" opacity="0.74"/><rect x="20.0" y="92.3" width="1.0" height="3.6" fill="#eef2f6" opacity="0.87"/><rect x="22.2" y="93.1" width="1.3" height="3.7" fill="#eef2f6" opacity="0.83"/><rect x="24.0" y="92.5" width="1.4" height="3.3" fill="#eef2f6" opacity="0.74"/><rect x="26.5" y="93.0" width="1.2" height="3.5" fill="#eef2f6" opacity="0.67"/><rect x="29.0" y="92.3" width="0.9" height="3.9" fill="#eef2f6" opacity="0.71"/><rect x="30.8" y="93.1" width="1.5" height="4.5" fill="#eef2f6" opacity="0.67"/><rect x="33.1" y="92.1" width="1.5" height="3.1" fill="#eef2f6" opacity="0.75"/><rect x="35.5" y="92.3" width="1.6" height="3.4" fill="#eef2f6" opacity="0.84"/><rect x="37.5" y="93.2" width="1.5" height="4.5" fill="#eef2f6" opacity="0.60"/><rect x="40.0" y="92.8" width="1.2" height="3.6" fill="#eef2f6" opacity="0.78"/><rect x="42.2" y="92.9" width="1.5" height="4.0" fill="#eef2f6" opacity="0.72"/><rect x="44.4" y="92.7" width="1.3" height="4.6" fill="#eef2f6" opacity="0.70"/><rect x="46.8" y="92.4" width="1.0" height="3.4" fill="#eef2f6" opacity="0.94"/><rect x="48.9" y="92.7" width="1.6" height="3.2" fill="#eef2f6" opacity="0.54"/><rect x="51.3" y="93.2" width="0.8" height="3.4" fill="#eef2f6" opacity="0.79"/><rect x="53.2" y="93.0" width="1.5" height="5.0" fill="#eef2f6" opacity="0.92"/><rect x="55.5" y="92.8" width="1.4" height="5.0" fill="#eef2f6" opacity="0.70"/><rect x="57.9" y="93.0" width="1.5" height="4.3" fill="#eef2f6" opacity="0.87"/><rect x="60.2" y="93.0" width="0.8" height="3.5" fill="#eef2f6" opacity="0.52"/><rect x="62.2" y="92.1" width="1.1" height="5.1" fill="#eef2f6" opacity="0.72"/><rect x="65.0" y="92.5" width="1.0" height="4.9" fill="#eef2f6" opacity="0.60"/><rect x="67.2" y="92.7" width="0.9" height="3.1" fill="#eef2f6" opacity="0.51"/><rect x="69.1" y="92.3" width="1.0" height="3.8" fill="#eef2f6" opacity="0.67"/><rect x="71.7" y="92.4" width="1.2" height="4.7" fill="#eef2f6" opacity="0.74"/><rect x="73.9" y="92.3" width="0.9" height="3.6" fill="#eef2f6" opacity="0.63"/><rect x="75.9" y="92.2" width="0.9" height="3.3" fill="#eef2f6" opacity="0.69"/><rect x="78.0" y="92.9" width="1.2" height="3.2" fill="#eef2f6" opacity="0.88"/><rect x="80.6" y="92.9" width="1.6" height="4.6" fill="#eef2f6" opacity="0.89"/><rect x="82.8" y="92.3" width="0.8" height="3.5" fill="#eef2f6" opacity="0.52"/><rect x="84.9" y="92.9" width="1.4" height="3.0" fill="#eef2f6" opacity="0.65"/><rect x="87.3" y="92.4" width="1.2" height="3.2" fill="#eef2f6" opacity="0.83"/><rect x="89.2" y="93.1" width="1.2" height="3.1" fill="#eef2f6" opacity="0.89"/><rect x="92.0" y="92.7" width="1.5" height="4.3" fill="#eef2f6" opacity="0.59"/><rect x="93.7" y="92.8" width="0.8" height="4.1" fill="#eef2f6" opacity="0.83"/><text x="50" y="97.4" text-anchor="middle" font-family="Liberation Serif,serif" font-size="5" font-weight="bold" fill="#eef2f6" opacity="0.5" textLength="86" lengthAdjust="spacingAndGlyphs">THE HIDDEN STEP</text></svg>
<!-- player -->
<svg class="a" style="left:1357.96px;top:1019.88px;width:106.48px;height:27.96px" viewBox="0 0 106.48 27.96"><path d="M1.23 1.05 L26.88 13.98 L1.23 26.92 Z" fill="url(#gPlay)"/><rect x="40.67" y="1.4" width="12.22" height="25.34" fill="url(#gPlay)"/><rect x="55.16" y="1.4" width="12.04" height="25.34" fill="url(#gPlay)"/><rect x="78.55" y="1.4" width="27.049999999999997" height="25.34" fill="url(#gPlay)"/></svg>
<div style="left:1477.35px;top:1014.99px;width:118.34px;height:38.27px;background:#f0f0f0;border:1px solid #a0a0a0;border-right-color:#fff;border-bottom-color:#fff"></div>
<span class="t b" style="left:1436.87px;width:200px;text-align:center;top:1027.09px;line-height:16px;font-size:14px;letter-spacing:0.35px">00:00:00.00</span>
<svg class="a" style="left:1614.74px;top:1022.05px;width:294.24px;height:3px;overflow:visible"><path d="M0.5 0v3M3.99 0v3M7.48 0v3M10.97 0v3M14.46 0v3M17.95 0v3M21.45 0v3M24.94 0v3M28.43 0v3M31.92 0v3M35.41 0v3M38.9 0v3M42.39 0v3M45.88 0v3M49.37 0v3M52.86 0v3M56.36 0v3M59.85 0v3M63.34 0v3M66.83 0v3M70.32 0v3M73.81 0v3M77.3 0v3M80.79 0v3M84.28 0v3M87.77 0v3M91.26 0v3M94.76 0v3M98.25 0v3M101.74 0v3M105.23 0v3M108.72 0v3M112.21 0v3M115.7 0v3M119.19 0v3M122.68 0v3M126.17 0v3M129.67 0v3M133.16 0v3M136.65 0v3M140.14 0v3M143.63 0v3M147.12 0v3M150.61 0v3M154.1 0v3M157.59 0v3M161.08 0v3M164.57 0v3M168.07 0v3M171.56 0v3M175.05 0v3M178.54 0v3M182.03 0v3M185.52 0v3M189.01 0v3M192.5 0v3M195.99 0v3M199.48 0v3M202.98 0v3M206.47 0v3M209.96 0v3M213.45 0v3M216.94 0v3M220.43 0v3M223.92 0v3M227.41 0v3M230.9 0v3M234.39 0v3M237.88 0v3M241.38 0v3M244.87 0v3M248.36 0v3M251.85 0v3M255.34 0v3M258.83 0v3M262.32 0v3M265.81 0v3M269.3 0v3M272.79 0v3M276.29 0v3M279.78 0v3M283.27 0v3M286.76 0v3M290.25 0v3M293.74 0v3" stroke="#bcbcbc" stroke-width="1" fill="none"/></svg>
<svg class="a" style="left:1614.74px;top:1047.04px;width:294.24px;height:3px;overflow:visible"><path d="M0.5 0v3M3.99 0v3M7.48 0v3M10.97 0v3M14.46 0v3M17.95 0v3M21.45 0v3M24.94 0v3M28.43 0v3M31.92 0v3M35.41 0v3M38.9 0v3M42.39 0v3M45.88 0v3M49.37 0v3M52.86 0v3M56.36 0v3M59.85 0v3M63.34 0v3M66.83 0v3M70.32 0v3M73.81 0v3M77.3 0v3M80.79 0v3M84.28 0v3M87.77 0v3M91.26 0v3M94.76 0v3M98.25 0v3M101.74 0v3M105.23 0v3M108.72 0v3M112.21 0v3M115.7 0v3M119.19 0v3M122.68 0v3M126.17 0v3M129.67 0v3M133.16 0v3M136.65 0v3M140.14 0v3M143.63 0v3M147.12 0v3M150.61 0v3M154.1 0v3M157.59 0v3M161.08 0v3M164.57 0v3M168.07 0v3M171.56 0v3M175.05 0v3M178.54 0v3M182.03 0v3M185.52 0v3M189.01 0v3M192.5 0v3M195.99 0v3M199.48 0v3M202.98 0v3M206.47 0v3M209.96 0v3M213.45 0v3M216.94 0v3M220.43 0v3M223.92 0v3M227.41 0v3M230.9 0v3M234.39 0v3M237.88 0v3M241.38 0v3M244.87 0v3M248.36 0v3M251.85 0v3M255.34 0v3M258.83 0v3M262.32 0v3M265.81 0v3M269.3 0v3M272.79 0v3M276.29 0v3M279.78 0v3M283.27 0v3M286.76 0v3M290.25 0v3M293.74 0v3" stroke="#bcbcbc" stroke-width="1" fill="none"/></svg>
<div style="left:1611.05px;top:1027.57px;width:299.18px;height:15.73px;background:#e7eaea;border:1px solid #d2d2d2"></div>
<div style="left:1609.66px;top:1026.0px;width:8.2px;height:18.87px;background:#c4c4c4"></div>
<!-- settings dialog -->
<div style="left:551.56px;top:377.48px;width:565.71px;height:656.38px;background:#f0f0f0;border:2.2px solid #2e8de4;border-bottom-width:1.6px;border-top:none;box-shadow:0 5px 20px 2px rgba(0,0,0,0.27),0 0 3px rgba(0,0,0,0.2)"></div>
<div style="left:551.56px;top:377.48px;width:565.71px;height:26.21px;background:#0078d7"></div>
<svg class="a" style="left:556.1px;top:380.27px;width:18.5px;height:18.52px" viewBox="0 0 32 32"><path d="M13 20 L4 29" stroke="#5550b4" stroke-width="5" stroke-linecap="round"/><circle cx="4.4" cy="28.4" r="2.2" fill="#e8eaf6"/><path d="M12 22 q6 4 12 -1 l1.5 8 q-7 4 -13 0 z" fill="#232063"/><circle cx="18.5" cy="12" r="8.8" fill="#9fd8f4" stroke="#3f3c96" stroke-width="3.2"/><circle cx="17.5" cy="10.5" r="3.6" fill="#cfeefb"/></svg>
<span class="t w" style="left:576.87px;top:383.06px;line-height:14px;font-size:12px;letter-spacing:0">Settings</span>
<svg class="a" style="left:1095.45px;top:384.29px;width:11.52px;height:11.53px" viewBox="0 0 10 10"><path d="M0 0L10 10M10 0L0 10" stroke="#fff" stroke-width="1.1" fill="none"/></svg>
<div style="left:554.36px;top:409.98px;width:560.11px;height:584.21px;border:1px solid #dcdcdc;box-sizing:border-box"></div>
<span class="t b cap" style="left:564.13px;top:403.68px;line-height:14px;">Options:</span>
<div style="left:560.47px;top:430.95px;width:545.45px;height:331.87px;border:1px solid #dcdcdc;box-sizing:border-box"></div>
<span class="t b cap" style="left:572.51px;top:423.6px;line-height:14px;">Compare options:</span>
<span class="t" style="left:581.24px;top:448.42px;line-height:14px;">FFT size:</span>
<div style="left:733.27px;top:444.93px;width:149.58px;height:20.8px;background:#e3e3e3;border:1px solid #adadad"></div>
<span class="t" style="left:737.11px;top:449.12px;line-height:14px;">256 samples</span>
<svg class="a" style="left:868.89px;top:453.15px;width:9.43px;height:5.59px" viewBox="0 0 10 6"><path d="M0.5 0.5L5 5L9.5 0.5" stroke="#333" stroke-width="1.3" fill="none"/></svg>
<span class="t" style="left:896.81px;top:442.13px;line-height:14px;">Larger values increase processing</span>
<span class="t" style="left:896.81px;top:454.88px;line-height:14px;">time.</span>
<span class="t" style="left:581.24px;top:487.91px;line-height:14px;">Allowed frequency variation:</span>
<div style="left:740.42px;top:487.22px;width:135.1px;height:15.03px;background:#e7eaea;border:1px solid #dfe2e2"></div>
<svg class="a" style="left:743.56px;top:487.57px;width:8.03px;height:15.73px" viewBox="0 0 8 15"><path d="M0 0H8V11L4 15L0 11Z" fill="#0a76d6"/></svg>
<svg class="a" style="left:744.11px;top:507.04px;width:128.42px;height:3px;overflow:visible"><path d="M0.5 0v3M4.75 0v3M8.99 0v3M13.24 0v3M17.49 0v3M21.74 0v3M25.98 0v3M30.23 0v3M34.48 0v3M38.73 0v3M42.97 0v3M47.22 0v3M51.47 0v3M55.72 0v3M59.96 0v3M64.21 0v3M68.46 0v3M72.7 0v3M76.95 0v3M81.2 0v3M85.45 0v3M89.69 0v3M93.94 0v3M98.19 0v3M102.44 0v3M106.68 0v3M110.93 0v3M115.18 0v3M119.43 0v3M123.67 0v3M127.92 0v3" stroke="#bdbdbd" stroke-width="1" fill="none"/></svg>
<span class="t" style="left:747.62px;width:120px;text-align:center;top:516.05px;line-height:14px;">12 Hz</span>
<span class="t" style="left:896.81px;top:478.13px;line-height:14px;">Larger value increases processing</span>
<span class="t" style="left:896.81px;top:491.15px;line-height:14px;">time but results more relaxed</span>
<span class="t" style="left:896.81px;top:504.17px;line-height:14px;">compare results. Default is 12 Hz.</span>
<span class="t" style="left:581.24px;top:539.12px;line-height:14px;">Allowed frame variation:</span>
<div style="left:740.42px;top:538.43px;width:135.1px;height:15.03px;background:#e7eaea;border:1px solid #dfe2e2"></div>
<svg class="a" style="left:743.56px;top:538.78px;width:8.03px;height:15.72px" viewBox="0 0 8 15"><path d="M0 0H8V11L4 15L0 11Z" fill="#0a76d6"/></svg>
<svg class="a" style="left:744.11px;top:558.25px;width:128.42px;height:3px;overflow:visible"><path d="M0.5 0v3M4.75 0v3M8.99 0v3M13.24 0v3M17.49 0v3M21.74 0v3M25.98 0v3M30.23 0v3M34.48 0v3M38.73 0v3M42.97 0v3M47.22 0v3M51.47 0v3M55.72 0v3M59.96 0v3M64.21 0v3M68.46 0v3M72.7 0v3M76.95 0v3M81.2 0v3M85.45 0v3M89.69 0v3M93.94 0v3M98.19 0v3M102.44 0v3M106.68 0v3M110.93 0v3M115.18 0v3M119.43 0v3M123.67 0v3M127.92 0v3" stroke="#bdbdbd" stroke-width="1" fill="none"/></svg>
<span class="t" style="left:747.62px;width:120px;text-align:center;top:567.25px;line-height:14px;">1 frames</span>
<span class="t" style="left:896.81px;top:529.33px;line-height:14px;">Larger value increases processing</span>
<span class="t" style="left:896.81px;top:542.35px;line-height:14px;">time but results more relaxed</span>
<span class="t" style="left:896.81px;top:555.37px;line-height:14px;">compare results. Default is 1 frames.</span>
<span class="t" style="left:581.24px;top:591.54px;line-height:14px;">Difference tolerance:</span>
<div style="left:740.42px;top:589.63px;width:135.1px;height:15.03px;background:#e7eaea;border:1px solid #dfe2e2"></div>
<svg class="a" style="left:816.7px;top:589.98px;width:8.03px;height:15.73px" viewBox="0 0 8 15"><path d="M0 0H8V11L4 15L0 11Z" fill="#0a76d6"/></svg>
<svg class="a" style="left:744.11px;top:609.45px;width:128.42px;height:3px;overflow:visible"><path d="M0.5 0v3M4.75 0v3M8.99 0v3M13.24 0v3M17.49 0v3M21.74 0v3M25.98 0v3M30.23 0v3M34.48 0v3M38.73 0v3M42.97 0v3M47.22 0v3M51.47 0v3M55.72 0v3M59.96 0v3M64.21 0v3M68.46 0v3M72.7 0v3M76.95 0v3M81.2 0v3M85.45 0v3M89.69 0v3M93.94 0v3M98.19 0v3M102.44 0v3M106.68 0v3M110.93 0v3M115.18 0v3M119.43 0v3M123.67 0v3M127.92 0v3" stroke="#bdbdbd" stroke-width="1" fill="none"/></svg>
<span class="t" style="left:747.62px;width:120px;text-align:center;top:621.25px;line-height:14px;">30 %</span>
<span class="t" style="left:896.81px;top:580.53px;line-height:14px;">Larger value increases processing</span>
<span class="t" style="left:896.81px;top:593.55px;line-height:14px;">time but results more relaxed</span>
<span class="t" style="left:896.81px;top:606.57px;line-height:14px;">compare results. Default is 30 %.</span>
<div class="cb" style="left:582.24px;top:655.13px;width:13px;height:13px"><svg viewBox="0 0 13 13" width="13" height="13" style="position:absolute;left:-1px;top:-1px"><path d="M2.2 6.3 L5.0 9.5 L10.9 2.9" fill="none" stroke="#111" stroke-width="1.45"/></svg></div>
<span class="t" style="left:596.77px;top:648.34px;line-height:14px;">Only compare when playtime</span>
<span class="t" style="left:596.77px;top:661.1px;line-height:14px;">difference is smaller than:</span>
<div style="left:752.47px;top:650.8px;width:65.8px;height:21.14px;background:#fff;border:1px solid #7a7a7a"></div>
<span class="t" style="left:757.53px;top:654.72px;line-height:14px;">2</span>
<svg class="a" style="left:801.51px;top:653.77px;width:12.4px;height:15.2px" viewBox="0 0 13 16" preserveAspectRatio="none"><rect x="0.5" y="0.5" width="12" height="7" fill="#e4e4e4" stroke="#a6a6a6" stroke-width="0.9"/><rect x="0.5" y="8.5" width="12" height="7" fill="#e4e4e4" stroke="#a6a6a6" stroke-width="0.9"/><path d="M2.6 6.2L6.5 1.8L10.4 6.2Z" fill="#000"/><path d="M2.6 9.8L6.5 14.2L10.4 9.8Z" fill="#000"/></svg>
<span class="t" style="left:823.51px;top:654.46px;line-height:14px;">seconds</span>
<span class="t" style="left:896.81px;top:639.08px;line-height:14px;">If you want to find songs in album</span>
<span class="t" style="left:896.81px;top:651.83px;line-height:14px;">files uncheck this option. Processing</span>
<span class="t" style="left:896.81px;top:664.77px;line-height:14px;">time will increase dramatically.</span>
<span class="t" style="left:580.89px;top:691.68px;line-height:14px;">Minimum playtime to compare:</span>
<div style="left:752.47px;top:688.54px;width:65.8px;height:21.15px;background:#fff;border:1px solid #7a7a7a"></div>
<span class="t" style="left:757.53px;top:692.47px;line-height:14px;">15</span>
<svg class="a" style="left:801.51px;top:691.51px;width:12.4px;height:15.21px" viewBox="0 0 13 16" preserveAspectRatio="none"><rect x="0.5" y="0.5" width="12" height="7" fill="#e4e4e4" stroke="#a6a6a6" stroke-width="0.9"/><rect x="0.5" y="8.5" width="12" height="7" fill="#e4e4e4" stroke="#a6a6a6" stroke-width="0.9"/><path d="M2.6 6.2L6.5 1.8L10.4 6.2Z" fill="#000"/><path d="M2.6 9.8L6.5 14.2L10.4 9.8Z" fill="#000"/></svg>
<span class="t" style="left:823.51px;top:691.68px;line-height:14px;">seconds</span>
<div class="btn" style="left:581.76px;top:725.94px;width:140.68px;height:21.15px;"></div>
<span class="t" style="left:551.75px;width:200px;text-align:center;top:730.3px;line-height:14px;color:#4a4a4a">Reset to defaults</span>
<span class="t" style="left:733.09px;top:730.3px;line-height:14px;">Click to reset all compare options to their default values.</span>
<div style="left:560.64px;top:778.37px;width:545.28px;height:204.46px;border:1px solid #dcdcdc;box-sizing:border-box"></div>
<span class="t b cap" style="left:571.64px;top:771.19px;line-height:14px;">File types to include in search:</span>
<div style="left:570.24px;top:787.46px;width:527.3px;height:188.73px;background:#fff;border:1px solid #828790;overflow:hidden"></div>
<div style="left:649.51px;top:788.85px;width:1px;height:23.07px;background:#e2e2e2"></div>
<div style="left:999.65px;top:788.85px;width:1px;height:23.07px;background:#e2e2e2"></div>
<span class="t" style="left:576.0px;top:794.26px;line-height:14px;">Extension</span>
<span class="t" style="left:656.29px;top:794.26px;line-height:14px;">Description</span>
<div class="cb" style="left:574.65px;top:815.56px;width:13px;height:13px"><svg viewBox="0 0 13 13" width="13" height="13" style="position:absolute;left:-1px;top:-1px"><path d="M2.2 6.3 L5.0 9.5 L10.9 2.9" fill="none" stroke="#111" stroke-width="1.45"/></svg></div>
<span class="t" style="left:593.11px;top:815.06px;line-height:14px;">*.AAC</span>
<span class="t" style="left:656.29px;top:815.06px;line-height:14px;">Advanced Audio Coding</span>
<div class="cb" style="left:574.65px;top:832.54px;width:13px;height:13px"><svg viewBox="0 0 13 13" width="13" height="13" style="position:absolute;left:-1px;top:-1px"><path d="M2.2 6.3 L5.0 9.5 L10.9 2.9" fill="none" stroke="#111" stroke-width="1.45"/></svg></div>
<span class="t" style="left:593.11px;top:832.04px;line-height:14px;">*.AC3</span>
<span class="t" style="left:656.29px;top:832.04px;line-height:14px;">Dolby Digital AC3</span>
<div class="cb" style="left:574.65px;top:849.53px;width:13px;height:13px"><svg viewBox="0 0 13 13" width="13" height="13" style="position:absolute;left:-1px;top:-1px"><path d="M2.2 6.3 L5.0 9.5 L10.9 2.9" fill="none" stroke="#111" stroke-width="1.45"/></svg></div>
<span class="t" style="left:593.11px;top:849.03px;line-height:14px;">*.AIF</span>
<span class="t" style="left:656.29px;top:849.03px;line-height:14px;">Audio Interchange File Format</span>
<div class="cb" style="left:574.65px;top:866.52px;width:13px;height:13px"><svg viewBox="0 0 13 13" width="13" height="13" style="position:absolute;left:-1px;top:-1px"><path d="M2.2 6.3 L5.0 9.5 L10.9 2.9" fill="none" stroke="#111" stroke-width="1.45"/></svg></div>
<span class="t" style="left:593.11px;top:866.02px;line-height:14px;">*.AIFC</span>
<span class="t" style="left:656.29px;top:866.02px;line-height:14px;">Audio Interchange File Format</span>
<div class="cb" style="left:574.65px;top:883.5px;width:13px;height:13px"><svg viewBox="0 0 13 13" width="13" height="13" style="position:absolute;left:-1px;top:-1px"><path d="M2.2 6.3 L5.0 9.5 L10.9 2.9" fill="none" stroke="#111" stroke-width="1.45"/></svg></div>
<span class="t" style="left:593.11px;top:883.0px;line-height:14px;">*.AIFF</span>
<span class="t" style="left:656.29px;top:883.0px;line-height:14px;">Audio Interchange File Format</span>
<div class="cb" style="left:574.65px;top:900.49px;width:13px;height:13px"><svg viewBox="0 0 13 13" width="13" height="13" style="position:absolute;left:-1px;top:-1px"><path d="M2.2 6.3 L5.0 9.5 L10.9 2.9" fill="none" stroke="#111" stroke-width="1.45"/></svg></div>
<span class="t" style="left:593.11px;top:899.99px;line-height:14px;">*.ALAC</span>
<span class="t" style="left:656.29px;top:899.99px;line-height:14px;">Apple Lossless</span>
<div class="cb" style="left:574.65px;top:917.48px;width:13px;height:13px"><svg viewBox="0 0 13 13" width="13" height="13" style="position:absolute;left:-1px;top:-1px"><path d="M2.2 6.3 L5.0 9.5 L10.9 2.9" fill="none" stroke="#111" stroke-width="1.45"/></svg></div>
<span class="t" style="left:593.11px;top:916.98px;line-height:14px;">*.APE</span>
<span class="t" style="left:656.29px;top:916.98px;line-height:14px;">Monkey's Audio</span>
<div class="cb" style="left:574.65px;top:934.46px;width:13px;height:13px"><svg viewBox="0 0 13 13" width="13" height="13" style="position:absolute;left:-1px;top:-1px"><path d="M2.2 6.3 L5.0 9.5 L10.9 2.9" fill="none" stroke="#111" stroke-width="1.45"/></svg></div>
<span class="t" style="left:593.11px;top:933.96px;line-height:14px;">*.FLA</span>
<span class="t" style="left:656.29px;top:933.96px;line-height:14px;">Free Lossless Audio Codec</span>
<div class="cb" style="left:574.65px;top:951.45px;width:13px;height:13px"><svg viewBox="0 0 13 13" width="13" height="13" style="position:absolute;left:-1px;top:-1px"><path d="M2.2 6.3 L5.0 9.5 L10.9 2.9" fill="none" stroke="#111" stroke-width="1.45"/></svg></div>
<span class="t" style="left:593.11px;top:950.95px;line-height:14px;">*.FLAC</span>
<span class="t" style="left:656.29px;top:950.95px;line-height:14px;">Free Lossless Audio Codec</span>
<div style="left:571.29px;top:966.9px;width:505.6600000000001px;height:8.25px;overflow:hidden">
<div class="cb" style="left:3.36px;top:1.54px;width:13px;height:13px"><svg viewBox="0 0 13 13" width="13" height="13" style="position:absolute;left:-1px;top:-1px"><path d="M2.2 6.3 L5.0 9.5 L10.9 2.9" fill="none" stroke="#111" stroke-width="1.45"/></svg></div>
<span class="t" style="left:21.82px;top:1.04px;line-height:14px">*.FLC</span>
<span class="t" style="left:85.0px;top:1.04px;line-height:14px">Free Lossless Audio Codec</span>
</div>
<div style="left:1077.99px;top:788.5px;width:17.46px;height:186.65px;background:#f0f0f0"></div>
<div style="left:1078.87px;top:805.98px;width:15.36px;height:49.63px;background:#cdcdcd"></div>
<svg class="a" style="left:1082.18px;top:794.52px;width:8.73px;height:5.24px" viewBox="0 0 10 6"><path d="M0.5 5L5 0.8L9.5 5" stroke="#303030" stroke-width="2.5" fill="none"/></svg>
<svg class="a" style="left:1082.18px;top:963.51px;width:8.73px;height:5.24px" viewBox="0 0 10 6"><path d="M0.5 0.8L5 5L9.5 0.8" stroke="#303030" stroke-width="2.5" fill="none"/></svg>
<div class="btn" style="left:953.37px;top:1002.06px;width:72.26px;height:23.07px;"></div>
<span class="t b" style="left:939.5px;width:100px;text-align:center;top:1006.77px;line-height:14px;">OK</span>
<div class="btn" style="left:1033.83px;top:1002.06px;width:72.44px;height:23.07px;"></div>
<span class="t b" style="left:1019.96px;width:100px;text-align:center;top:1006.77px;line-height:14px;">Cancel</span>
</div>
</body></html>
